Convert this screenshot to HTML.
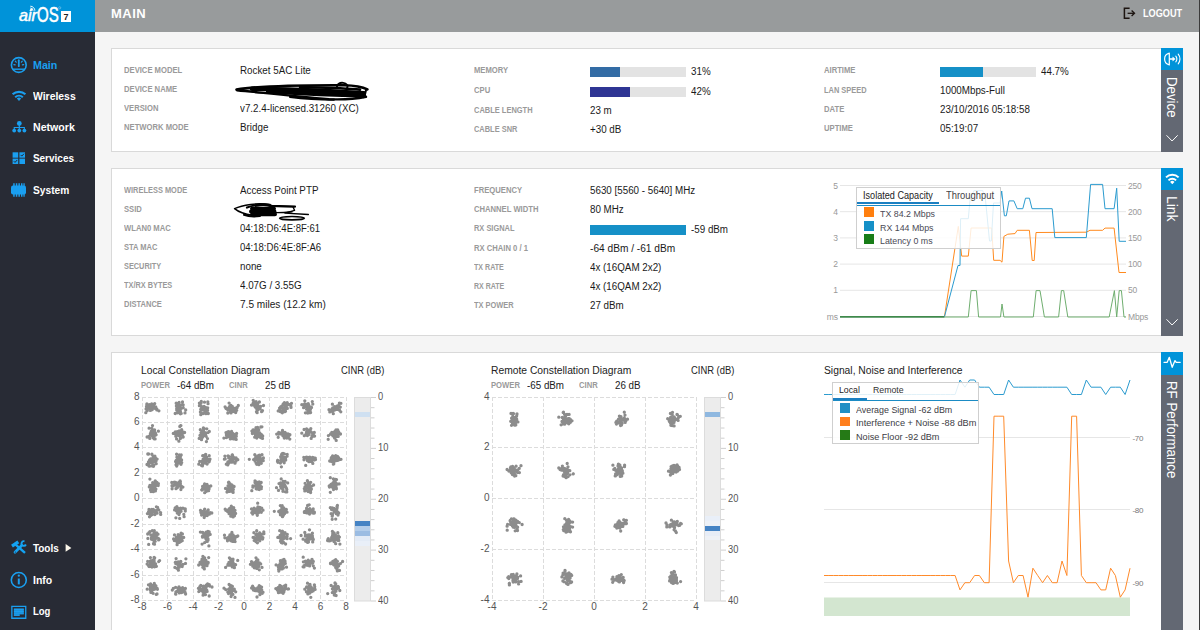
<!DOCTYPE html>
<html lang="en">
<head>
<meta charset="utf-8">
<title>airOS - Main</title>
<style>
html,body{margin:0;padding:0;}
body{width:1201px;height:630px;overflow:hidden;position:relative;background:#f5f5f5;font-family:"Liberation Sans",sans-serif;font-size:10px;color:#1a1a1a;}
.lb,.vl,.nav,.t,.ct{position:absolute;white-space:nowrap;}
#side{position:absolute;left:0;top:0;width:95px;height:630px;background:#282b35;}
#logo{position:absolute;left:0;top:0;width:95px;height:32px;background:#0093d9;}
#head{position:absolute;left:95px;top:0;width:1104px;height:32px;background:#989b9c;}
#edge{position:absolute;left:1199px;top:0;width:1px;height:630px;background:#3b3b3b;}
#edge2{position:absolute;left:1200px;top:0;width:1px;height:630px;background:#fff;}
#title{position:absolute;left:111px;top:6px;font-size:13px;font-weight:bold;color:#fff;letter-spacing:.5px;line-height:16px;}
#logout{position:absolute;left:1142.7px;top:7px;font-size:10px;font-weight:bold;color:#fff;line-height:13px;transform:scaleX(.915);transform-origin:0 50%;}
.panel{position:absolute;left:111px;width:1049px;background:#fff;border:1px solid #d9d9d9;}
.tab{position:absolute;left:1161px;width:22px;background:#636873;}
.tabtop{position:absolute;left:0;top:0;width:22px;height:22px;background:#0093d9;}
.tabtxt{position:absolute;left:19.2px;transform-origin:0 0;transform:rotate(90deg) scaleX(.885);color:#fff;font-size:15px;line-height:15px;white-space:nowrap;}
.lb{font-size:8.5px;color:#9a9a9a;line-height:10px;transform:scaleX(.9);transform-origin:0 50%;font-weight:bold;}
.vl{font-size:10px;color:#1a1a1a;line-height:12px;transform:scaleX(.98);transform-origin:0 50%;}
.nav{left:32.9px;font-size:10px;font-weight:bold;color:#fff;line-height:14px;transform:scaleX(1.05);transform-origin:0 50%;}
.bar{position:absolute;height:10px;width:96px;background:#e3e3e3;}
.bar i{position:absolute;left:0;top:0;height:10px;display:block;}
svg{position:absolute;left:0;top:0;overflow:visible;}
.ct{font-size:10px;color:#222;line-height:12px;}
.t{font-size:9px;line-height:10px;color:#555;}
</style>
</head>
<body>

<!-- SIDEBAR -->
<div id="side"></div>
<div id="logo"></div>
<div class="t" style="left:19px;top:5.85px;font-size:17px;line-height:20px;font-style:italic;color:#fff;-webkit-text-stroke:.5px #fff;transform:scaleX(.95);transform-origin:0 50%">air</div>
<div class="t" style="left:37.3px;top:3px;font-size:21.5px;line-height:24px;color:#fff;-webkit-text-stroke:.5px #fff;transform:scaleX(.7);transform-origin:0 50%">OS</div>
<div style="position:absolute;left:61px;top:11px;width:10px;height:11px;background:#fff"></div>
<div class="t" style="left:63.5px;top:11.5px;font-size:9px;font-weight:bold;color:#222;line-height:10px">7</div>
<svg width="95" height="32" viewBox="0 0 95 32"><g fill="none" stroke="#fff" stroke-width=".9"><path d="M30.3 6.2 a4.6 4.6 0 0 1 4.6 4.6"/><path d="M30.3 8 a2.8 2.8 0 0 1 2.8 2.8"/><circle cx="30.6" cy="10.4" r=".5" fill="#fff"/><circle cx="59.7" cy="7.8" r="1.1" stroke-width=".4" stroke="#bfe3f6"/></g></svg>

<div class="nav" style="top:59px;color:#1a9ff0;transform:scaleX(1.07)">Main</div>
<div class="nav" style="top:90px;transform:scaleX(1.04)">Wireless</div>
<div class="nav" style="top:121px;transform:scaleX(1.06)">Network</div>
<div class="nav" style="top:152px;transform:scaleX(1)">Services</div>
<div class="nav" style="top:184px;transform:scaleX(1.02)">System</div>
<div class="nav" style="top:542px;transform:scaleX(1)">Tools</div>
<div class="nav" style="top:574px;transform:scaleX(1.05)">Info</div>
<div class="nav" style="top:605px;transform:scaleX(0.95)">Log</div>
<svg width="95" height="630" viewBox="0 0 95 630">
<g fill="none" stroke="#1a9ff0" stroke-width="1.6" stroke-linecap="round">
 <!-- main gauge -->
 <circle cx="18.8" cy="65" r="7.4"/>
 <path d="M18.8 66.2V60.2" stroke-width="1.8"/>
 <path d="M12.6 69.2H25" stroke-width="1.4" stroke-linecap="butt"/>
 <path d="M15.3 61.2l.9 1M13.9 64.6l1.3.3M22.3 61.2l-.9 1M23.7 64.6l-1.3.3" stroke-width="1.2"/>
 <!-- wireless -->
 <path d="M12.6 94.3a9.4 9.4 0 0 1 12.8 0" stroke-width="2.2" stroke-linecap="butt"/>
 <path d="M15.2 97.2a5.6 5.6 0 0 1 7.6 0" stroke-width="2.1" stroke-linecap="butt"/>
 <path d="M19 101l-2.2-2.4a3.1 3.1 0 0 1 4.4 0z" fill="#1a9ff0" stroke="none"/>
 <!-- info -->
 <circle cx="18.8" cy="580" r="7.5" stroke-width="1.6"/>
 <path d="M18.8 578.5V584.4" stroke-width="2" stroke-linecap="butt"/>
 <circle cx="18.8" cy="575.7" r="1.15" fill="#1a9ff0" stroke="none"/>
</g>
<g fill="#1a9ff0" stroke="none">
 <!-- network -->
 <circle cx="19.3" cy="123.4" r="2.4"/>
 <circle cx="14.2" cy="130.6" r="1.9"/><circle cx="19.3" cy="130.6" r="1.9"/><circle cx="24.4" cy="130.6" r="1.9"/>
 <path d="M18.7 125h1.2v2h5v3h-1.1v-1.9h-3.9v1.9h-1.2v-1.9h-3.9v1.9h-1.1v-3h5z"/>
 <!-- services -->
 <rect x="12.6" y="152.3" width="5.6" height="5.4"/><rect x="19.4" y="152.3" width="5.6" height="5.4"/>
 <rect x="12.6" y="158.6" width="5.6" height="5.4"/><rect x="19.4" y="158.6" width="5.6" height="5.4"/>
 <!-- system chip -->
 <rect x="11" y="185.4" width="15" height="9" rx="2"/>
 <path d="M13.2 183.3h1.5v13.4h-1.5zM15.8 183.3h1.5v13.4h-1.5zM18.4 183.3h1.5v13.4h-1.5zM21 183.3h1.5v13.4h-1.5zM23.4 183.3h1.3v13.4h-1.3z"/>
 <!-- log -->
 <path d="M11.2 605.8h15.2v13.1h-15.2zM12.5 607.1v10.5h12.6v-10.5z" fill-rule="evenodd"/>
 <path d="M13.9 608.6h9.9v5.8h-4.2v1.7h-5.7z" opacity=".8"/><path d="M13.9 608.7h9.9v1.3h-9.9zM13.9 610.6h9.9v1.3h-9.9zM13.9 612.5h9.9v1.3h-9.9zM13.9 614.4h5.7v1.3h-5.7z"/>
 <!-- tools -->
 <path d="M15.6 544.6L25 552.8" stroke="#14a3f3" stroke-width="2.4" fill="none"/>
 <path d="M12 546.1L18.3 541.9" stroke="#14a3f3" stroke-width="3.3" fill="none"/>
 <path d="M21.4 545.8L15 552.3" stroke="#14a3f3" stroke-width="2.7" stroke-linecap="round" fill="none"/>
 <path d="M24.5 541.3A2.3 2.3 0 1 0 25.9 544.5" stroke="#14a3f3" stroke-width="1.9" fill="none"/>
 <circle cx="15.3" cy="552.1" r=".55" fill="#282b35"/>
</g>
<g fill="none" stroke="#282b35" stroke-width="1">
 <path d="M20.6 154.9l1.2 1.2 2.2-2.4"/><path d="M13.8 161.2l1.2 1.2 2.2-2.4"/>
</g>
<path d="M65.6 544v7.8l5.8-3.9z" fill="#fbf6ea"/>
</svg>

<!-- HEADER -->
<div id="head"></div>
<div id="title">MAIN</div>
<div id="logout">LOGOUT</div>
<svg width="1201" height="32" viewBox="0 0 1201 32"><g fill="none" stroke="#1c1410" stroke-width="1.5"><path d="M1129.6 8.3h-5.2v10h5.2"/><path d="M1127.6 13.3h6.4" stroke-width="1.3"/><path d="M1131.6 10.6l2.9 2.7-2.9 2.7" stroke-width="1.3"/></g></svg>
<div id="edge"></div><div id="edge2"></div>

<!-- PANEL 1 : DEVICE -->
<div class="panel" style="top:48px;height:102px"></div>
<div class="tab" style="top:48px;height:104px"><div class="tabtop"></div><div class="tabtxt" style="top:29px">Device</div></div>
<svg width="1201" height="160" viewBox="0 0 1201 160"><g fill="none" stroke="#fff" stroke-width="1.1" stroke-linecap="round">
 <path d="M1169.3 53v12M1169.3 53.2a6.3 6 0 0 0 0 11.6" stroke-width="1.2"/>
 <path d="M1169.8 59h3.4" stroke-width="1.4"/><path d="M1173 57.3l2.2 1.7-2.2 1.7z" fill="#fff" stroke-width=".6"/>
 <path d="M1175.8 56.2a4.6 4.6 0 0 1 0 5.6"/><path d="M1178.2 54.2a7.4 7.4 0 0 1 0 9.6"/>
 <path d="M1166.8 135.6l5.3 5.4 5.3-5.4" stroke-width="1"/>
</g></svg>

<div class="lb" style="left:124px;top:65px">DEVICE MODEL</div><div class="vl" style="left:240px;top:65px">Rocket 5AC Lite</div>
<div class="lb" style="left:124px;top:84px">DEVICE NAME</div>
<div class="lb" style="left:124px;top:103px">VERSION</div><div class="vl" style="left:240px;top:103px">v7.2.4-licensed.31260 (XC)</div>
<div class="lb" style="left:124px;top:122px">NETWORK MODE</div><div class="vl" style="left:240px;top:122px">Bridge</div>

<div class="lb" style="left:474px;top:65px">MEMORY</div><div class="bar" style="left:590px;top:67px"><i style="width:30px;background:#336ca5"></i></div><div class="vl" style="left:691px;top:66px">31%</div>
<div class="lb" style="left:474px;top:85px">CPU</div><div class="bar" style="left:590px;top:87px"><i style="width:40px;background:#2f3594"></i></div><div class="vl" style="left:691px;top:86px">42%</div>
<div class="lb" style="left:474px;top:105px;transform:scaleX(0.88)">CABLE LENGTH</div><div class="vl" style="left:590px;top:105px">23 m</div>
<div class="lb" style="left:474px;top:124px;transform:scaleX(0.875)">CABLE SNR</div><div class="vl" style="left:590px;top:124px">+30 dB</div>

<div class="lb" style="left:824px;top:65px">AIRTIME</div><div class="bar" style="left:940px;top:67px"><i style="width:43px;background:#1590c7"></i></div><div class="vl" style="left:1041px;top:66px">44.7%</div>
<div class="lb" style="left:824px;top:85px;transform:scaleX(0.875)">LAN SPEED</div><div class="vl" style="left:940px;top:85px">1000Mbps-Full</div>
<div class="lb" style="left:824px;top:104px">DATE</div><div class="vl" style="left:940px;top:104px">23/10/2016 05:18:58</div>
<div class="lb" style="left:824px;top:123px">UPTIME</div><div class="vl" style="left:940px;top:123px">05:19:07</div>

<!-- redaction scribble over device name -->
<svg width="1201" height="160" viewBox="0 0 1201 160"><g fill="none" stroke="#000" stroke-linecap="round" stroke-linejoin="round">
 <path d="M236.5 89.6C262 85.5 300 85 344 85.2c10 .2 18 1.4 23.4 4.2" stroke-width="2.6"/>
 <path d="M237 90.2c30 3 60 6.5 92 9 14 .6 28-.6 37-2.4" stroke-width="2.4"/>
 <path d="M252 88.8c36 .2 70 2 112 4.4" stroke-width="4.6"/>
 <path d="M268 91.4c30 1.8 62 3.4 96 4" stroke-width="4.2"/>
 <path d="M300 87c22 .6 44 1 60 2.6" stroke-width="2.6"/>
 <path d="M337 87.6c-.6-3.6 3-5.2 6.2-4.8 3.4.4 5.4 3 3.6 5.6" stroke-width="1.8"/>
 <path d="M366 90.4l-2.2 6.8" stroke-width="2"/>
 <path d="M290 96.8c14 1.8 28 2.7 44 2.8" stroke-width="2.2"/>
</g></svg>

<!-- PANEL 2 : LINK -->
<div class="panel" style="top:168px;height:166px"></div>
<div class="tab" style="top:168px;height:168px"><div class="tabtop"></div><div class="tabtxt" style="top:28.3px;transform:rotate(90deg) scaleX(.93)">Link</div></div>
<svg width="1201" height="340" viewBox="0 0 1201 340"><g fill="none" stroke="#fff" stroke-linecap="butt">
 <path d="M1166 177.4a9 9 0 0 1 12.6 0" stroke-width="2"/>
 <path d="M1168.5 180.3a5.4 5.4 0 0 1 7.6 0" stroke-width="1.9"/>
 <path d="M1172.3 184.2l-2.2-2.3a3.1 3.1 0 0 1 4.4 0z" fill="#fff" stroke="none"/>
 <path d="M1166.8 319.6l5.3 5.4 5.3-5.4" stroke-width="1" stroke-linecap="round"/>
</g></svg>

<div class="lb" style="left:124px;top:185px;transform:scaleX(0.875)">WIRELESS MODE</div><div class="vl" style="left:240px;top:185px">Access Point PTP</div>
<div class="lb" style="left:124px;top:204px">SSID</div>
<div class="lb" style="left:124px;top:223px">WLAN0 MAC</div><div class="vl" style="left:240px;top:223px;transform:scaleX(.953)">04:18:D6:4E:8F:61</div>
<div class="lb" style="left:124px;top:242px;transform:scaleX(0.885)">STA MAC</div><div class="vl" style="left:240px;top:242px;transform:scaleX(.953)">04:18:D6:4E:8F:A6</div>
<div class="lb" style="left:124px;top:261px;transform:scaleX(0.865)">SECURITY</div><div class="vl" style="left:240px;top:261px">none</div>
<div class="lb" style="left:124px;top:280px;transform:scaleX(0.865)">TX/RX BYTES</div><div class="vl" style="left:240px;top:280px">4.07G / 3.55G</div>
<div class="lb" style="left:124px;top:299px;transform:scaleX(0.885)">DISTANCE</div><div class="vl" style="left:240px;top:299px;transform:scaleX(1.01)">7.5 miles (12.2 km)</div>

<div class="lb" style="left:474px;top:185px">FREQUENCY</div><div class="vl" style="left:590px;top:185px">5630 [5560 - 5640] MHz</div>
<div class="lb" style="left:474px;top:204px">CHANNEL WIDTH</div><div class="vl" style="left:590px;top:204px">80 MHz</div>
<div class="lb" style="left:474px;top:223px;transform:scaleX(0.875)">RX SIGNAL</div><div class="bar" style="left:590px;top:225px"><i style="width:96px;background:#1590c7"></i></div><div class="vl" style="left:691px;top:224px">-59 dBm</div>
<div class="lb" style="left:474px;top:243px">RX CHAIN 0 / 1</div><div class="vl" style="left:590px;top:243px;transform:scaleX(1.015)">-64 dBm / -61 dBm</div>
<div class="lb" style="left:474px;top:262px;transform:scaleX(0.835)">TX RATE</div><div class="vl" style="left:590px;top:262px">4x (16QAM 2x2)</div>
<div class="lb" style="left:474px;top:281px;transform:scaleX(0.825)">RX RATE</div><div class="vl" style="left:590px;top:281px">4x (16QAM 2x2)</div>
<div class="lb" style="left:474px;top:300px;transform:scaleX(0.875)">TX POWER</div><div class="vl" style="left:590px;top:300px">27 dBm</div>

<!-- redaction scribble over SSID -->
<svg width="1201" height="340" viewBox="0 0 1201 340"><g fill="none" stroke="#000" stroke-linecap="round" stroke-linejoin="round">
 <path d="M270 204.6c-12-2.2-28 .4-35.4 4 4 3.4 10 5.6 18 6.6" stroke-width="1.5"/>
 <path d="M247 207.5c8-3 18-3.4 24-1.6l24 .6" stroke-width="2.2"/>
 <path d="M252 208.8h22M251 211.6h23.5M252 214.3h23" stroke-width="4"/><path d="M256 205.6c6-1.4 12-1.2 16 .6" stroke-width="2.6"/>
 <path d="M244 214.8c4 1.6 10 2 16 1.2" stroke-width="2"/>
 <path d="M272 206.3l23 .4" stroke-width="1.6"/>
 <path d="M274 212.6c6 .2 12-.2 18-.8" stroke-width="1.4"/>
 <path d="M293 207l1.6 3.4-9.6 2.8 23.4 1.3" stroke-width="1.3"/>
 <ellipse cx="292" cy="218.2" rx="12.4" ry="1.7" stroke-width="1.6"/>
</g></svg>

<!-- throughput chart -->
<svg width="1201" height="340" viewBox="0 0 1201 340" shape-rendering="auto">
<g stroke="#e6e6e6" stroke-width="1"><path d="M840 185.5H1126"/><path d="M840 211.7H1126"/><path d="M840 237.9H1126"/><path d="M840 264.1H1126"/><path d="M840 290.3H1126"/><path d="M840 316.5H1126"/></g>
<g fill="none" stroke-width="1" stroke-linejoin="round"><polyline points="840,317 944.4,317 958.3,226.4 961.7,256.1 968.3,256.1 971.1,228 991.7,228 993.7,260.3 1000,260.3 1002,262.2 1003.9,236.4 1007.8,234.2 1015,233.6 1017.2,230.3 1029.4,230.3 1032.2,260.5 1034.2,260.5 1036,232.5 1086.3,232.2 1090,230.3 1102.6,230.3 1105,228.1 1114.1,228.1 1119,272.5 1126,272.5" stroke="#ff8a1e"/><polyline points="840,317 944.4,317 958,265.5 960,265.5 960.6,218.7 968.3,218.7 970,200 973.9,190.7 982.8,190.7 985.5,200 987.2,217 989.5,241 991.3,241 993.5,203 1000,203 1001.7,191 1004.4,215.8 1006.3,215.8 1009,200.9 1013.9,200.9 1017.2,208.7 1022.8,208.7 1025.5,198.2 1029.4,198.2 1032,208.7 1052.2,208.7 1054.8,237.6 1086.3,237.6 1090.6,184.4 1102.6,184.4 1105,208.7 1114.1,208.7 1116.7,188.2 1119.2,241.3 1126,241.3" stroke="#2b9bcf"/><polyline points="840,317 968.3,317 971.1,290.6 976.4,290.6 978.6,317 1000.5,317 1002,304 1003.9,317 1033.3,317 1036.1,290.6 1040,290.6 1044.4,317 1058.6,317 1061.4,290.6 1063.7,290.6 1067.8,317 1109.2,317 1114.4,290.6 1116.7,317 1119.2,290.6 1121.4,290.6 1124,317 1126,317" stroke="#6fae6f"/><path d="M840 316.6H944" stroke="#3f8a4a" stroke-width="1.4"/></g>
</svg>
<div class="t ax" style="left:818px;width:20px;text-align:right;top:180.5px;color:#999;font-size:8.5px">5</div>
<div class="t ax" style="left:818px;width:20px;text-align:right;top:206.7px;color:#999;font-size:8.5px">4</div>
<div class="t ax" style="left:818px;width:20px;text-align:right;top:232.9px;color:#999;font-size:8.5px">3</div>
<div class="t ax" style="left:818px;width:20px;text-align:right;top:259.1px;color:#999;font-size:8.5px">2</div>
<div class="t ax" style="left:818px;width:20px;text-align:right;top:285.3px;color:#999;font-size:8.5px">1</div>
<div class="t ax" style="left:818px;width:20px;text-align:right;top:311.5px;color:#999;font-size:8.5px">ms</div>
<div class="t ax" style="left:1128px;top:180.5px;color:#999;font-size:8.5px;letter-spacing:-.2px">250</div>
<div class="t ax" style="left:1128px;top:206.7px;color:#999;font-size:8.5px;letter-spacing:-.2px">200</div>
<div class="t ax" style="left:1128px;top:232.9px;color:#999;font-size:8.5px;letter-spacing:-.2px">150</div>
<div class="t ax" style="left:1128px;top:259.1px;color:#999;font-size:8.5px;letter-spacing:-.2px">100</div>
<div class="t ax" style="left:1128px;top:285.3px;color:#999;font-size:8.5px;letter-spacing:-.2px">50</div>
<div class="t ax" style="left:1128px;top:311.5px;color:#999;font-size:8.5px;letter-spacing:-.2px">Mbps</div>
<div style="position:absolute;left:856px;top:187px;width:143px;height:60px;background:rgba(255,255,255,.84);border:1px solid #cfcfcf"></div>
<div style="position:absolute;left:857px;top:202px;width:82px;height:2px;background:#1b7fc1"></div>
<div style="position:absolute;left:857px;top:205px;width:143px;height:1px;background:#1b8bc4"></div>
<div class="t" style="left:863px;top:189.5px;font-size:10px;line-height:12px;color:#222;transform:scaleX(.91);transform-origin:0 50%">Isolated Capacity</div>
<div class="t" style="left:945.5px;top:189.5px;font-size:10px;line-height:12px;color:#444;transform:scaleX(.94);transform-origin:0 50%">Throughput</div>
<div style="position:absolute;left:864px;top:207px;width:10px;height:10px;background:#ff7f0e"></div>
<div class="t" style="left:880px;top:208px;font-size:9.5px;line-height:11px;color:#4a4a55;transform:scaleX(.93);transform-origin:0 50%">TX 84.2 Mbps</div>
<div style="position:absolute;left:864px;top:221px;width:10px;height:10px;background:#1590c7"></div>
<div class="t" style="left:880px;top:222px;font-size:9.5px;line-height:11px;color:#4a4a55;transform:scaleX(.93);transform-origin:0 50%">RX 144 Mbps</div>
<div style="position:absolute;left:864px;top:234px;width:10px;height:10px;background:#187d18"></div>
<div class="t" style="left:880px;top:235px;font-size:9.5px;line-height:11px;color:#4a4a55;transform:scaleX(.93);transform-origin:0 50%">Latency 0 ms</div>
<!-- PANEL 3 : RF PERFORMANCE -->
<div class="panel" style="top:352px;height:290px"></div>
<div class="tab" style="top:352px;height:290px"><div class="tabtop" style="height:23px"></div><div class="tabtxt" style="top:28.8px">RF Performance</div></div>
<svg width="1201" height="630" viewBox="0 0 1201 630"><path d="M1164 362.3h3.2l2.1-5 2.9 10 2.8-6.7 1.2 1.7h4" fill="none" stroke="#fff" stroke-width="1.3" stroke-linejoin="round" stroke-linecap="round"/></svg>
<div class="ct" style="left:141px;top:365px;transform:scaleX(1.03);transform-origin:0 50%">Local Constellation Diagram</div>
<div class="ct" style="left:341px;top:365px;transform:scaleX(.94);transform-origin:0 50%">CINR (dB)</div>
<div class="lb" style="left:141px;top:380px">POWER</div><div class="vl" style="left:177px;top:379.5px">-64 dBm</div>
<div class="lb" style="left:229px;top:380px">CINR</div><div class="vl" style="left:265px;top:379.5px">25 dB</div>
<svg width="1201" height="630" viewBox="0 0 1201 630">
<path d="M142 397V600.5M142 397H346M167.5 397V600.5M142 422.438H346M193 397V600.5M142 447.875H346M218.5 397V600.5M142 473.312H346M244 397V600.5M142 498.75H346M269.5 397V600.5M142 524.188H346M295 397V600.5M142 549.625H346M320.5 397V600.5M142 575.062H346M346 397V600.5M142 600.5H346" fill="none" stroke="#dcdcdc" stroke-width="1" stroke-dasharray="4 2" shape-rendering="crispEdges"/>
<path d="M146.9 404h0M152.6 408.2h0M149.9 407.7h0M151.2 406.8h0M146.8 404.2h0M149.4 404.6h0M156.8 409h0M154.8 408.1h0M150.6 406.6h0M148.2 407.9h0M148.3 405.4h0M151.9 406.2h0M150.4 406.3h0M156.9 409.9h0M147.9 405.3h0M147.9 406.6h0M153.5 405h0M155.7 406.8h0M152.3 408.6h0M152.9 406.4h0M150.7 409.4h0M149.9 408.9h0M151.4 406.5h0M150.2 406.8h0M147.1 410.7h0M146.1 408.9h0M156.4 409.2h0M154.7 403.6h0M150.3 408.6h0M146.5 406.4h0M153.9 407.9h0M152.1 409.7h0M154.8 408.3h0M151.7 409.2h0M151.7 405.7h0M151.7 404h0M150.3 410.4h0M151.1 409h0M151.3 407.3h0M151.8 409.8h0M145.8 412.7h0M158.9 410.8h0M180.4 413.8h0M177.3 407.2h0M178.6 410.6h0M179.2 408.3h0M180.6 409.4h0M177.4 408.6h0M178.7 404h0M177.6 408.2h0M185 412.9h0M181.8 404.8h0M176.2 403.2h0M181.2 413.4h0M179.2 405.3h0M176.4 406h0M177.6 407.1h0M180 412.3h0M177.5 412.8h0M177.7 412.7h0M179.1 402.5h0M179.4 407.6h0M176.7 410.1h0M182.5 402h0M180 405.2h0M177.6 412.1h0M180.2 412.5h0M177.4 408.3h0M183.2 407.7h0M177.3 403.6h0M178.6 406.4h0M180.4 411.6h0M183.2 404.8h0M181.2 408.4h0M178.5 408.2h0M180 407.1h0M180.2 407.9h0M179.3 410.7h0M176.7 408.7h0M176.8 406.9h0M179 407.7h0M179.1 410.3h0M179.3 407.7h0M175.2 413.5h0M185.7 409.9h0M205.8 411.7h0M202.5 409.2h0M202.7 409.5h0M207.8 401.8h0M207.6 410.2h0M208 403.7h0M203.1 413.5h0M208 413.5h0M207.7 407.8h0M200.4 412h0M199.4 405.7h0M205.6 412h0M199.4 403.1h0M206.1 407.7h0M203.5 410h0M208.3 413.5h0M200.9 413.3h0M205.9 413.7h0M201.1 406h0M204.1 408.8h0M206.1 413.6h0M204.5 402.2h0M201.1 402.8h0M206.4 409.2h0M202 408.7h0M200.7 409.3h0M201.4 408.6h0M200.8 414.7h0M203.4 409.7h0M201.4 406.6h0M201.3 410h0M202.5 408.3h0M204.1 408.3h0M203.5 408.7h0M207.3 408.4h0M205.3 409.9h0M204.1 406.3h0M201.3 401.4h0M233.5 410.3h0M236.7 410.3h0M233.4 409.7h0M235.2 408.8h0M231.4 410.2h0M225.3 407.3h0M228.6 408h0M225.1 406.8h0M237.2 407.5h0M232.7 407.9h0M227.7 408.6h0M228.6 409.3h0M229.7 406.3h0M231.2 410.3h0M234.4 411.7h0M235.3 408.1h0M229.1 409.4h0M232.9 410.7h0M231.1 407.6h0M232.5 407.9h0M230.1 407h0M229.1 403.1h0M228 409.3h0M230 409.1h0M228.8 409.6h0M226.1 408.5h0M227.8 409.7h0M227.8 413h0M235.7 412.5h0M231 412.9h0M232 409.1h0M231.8 407.9h0M231 405.5h0M232.3 406.5h0M232.5 407.9h0M229.1 408.1h0M229.5 408.5h0M230.4 411.3h0M232.3 411.6h0M238.3 405.5h0M261.9 411.4h0M251.5 405.1h0M257.4 406.3h0M259.4 402h0M259.7 408.4h0M257.1 412.7h0M256.8 403.8h0M256.9 409.5h0M257.7 405.1h0M263.5 405.5h0M258 407.6h0M253.2 403.1h0M255.9 405.4h0M253.5 405h0M257.2 403.3h0M253.9 402.2h0M259.9 408.6h0M257 408.6h0M256.5 411.8h0M258.2 406h0M262.5 410.6h0M258.1 407h0M256.1 401.6h0M256.7 406.7h0M257.6 404.7h0M253.2 403.1h0M255.8 403h0M258.9 408.7h0M257.5 407.2h0M255.2 407h0M259.9 408.8h0M261.6 411.7h0M257.8 408.1h0M257.3 407.7h0M257.2 409.4h0M257.7 409.9h0M260.1 408.7h0M258.9 408.8h0M256.6 407.9h0M257.2 406.6h0M260.7 406.3h0M253.2 400.3h0M285.4 407.2h0M284.8 411.7h0M286.3 405h0M286.7 408.4h0M282.3 412.8h0M288.9 404.4h0M280.2 411.5h0M285.5 411.2h0M281.5 412h0M283 408.2h0M290.9 406.2h0M284.2 404.5h0M283.3 408.1h0M285.7 406h0M282.1 405.8h0M278.2 410.9h0M283.5 409h0M287.9 403.8h0M287.2 402.7h0M284 409.7h0M285.1 408.9h0M286.9 407.3h0M283.9 408.8h0M283.1 410.2h0M280.1 410.7h0M280.6 407h0M283.2 403.9h0M287.3 408.4h0M285.1 409.1h0M279.6 408.1h0M284.8 408.4h0M281.3 407.9h0M283.5 409.5h0M284.4 402.7h0M282.5 407.3h0M285.4 408.6h0M283.7 408.3h0M291 407.4h0M291.5 403.3h0M310.5 409.3h0M310.2 411.8h0M303.6 407.7h0M308.3 406.3h0M307.9 411.6h0M308 404h0M306.6 409.2h0M304.7 403.9h0M307.8 413.1h0M309.2 408.2h0M309.4 412.7h0M309.2 409.8h0M306.9 404.3h0M307.9 412.3h0M306.7 404.4h0M307.6 406.9h0M305.4 412.8h0M303.5 404.7h0M306.6 407h0M308.6 404.6h0M304.8 400.8h0M310.6 412.6h0M312.3 401.6h0M309 411.7h0M309 406.9h0M310.7 406.8h0M311.5 407.5h0M307.6 406.8h0M308.7 409h0M308.2 403.6h0M305 405h0M309.5 406.9h0M307.5 406h0M306.8 406.6h0M308.8 407.9h0M309.2 410.5h0M307.2 407.1h0M312.8 404.1h0M307.5 407.4h0M308.5 407.8h0M301.8 404.7h0M338 405.8h0M336.7 406.3h0M332.1 408.8h0M333.3 409.4h0M339.8 406.8h0M333.8 410.3h0M334.7 406.7h0M337.4 406h0M329.8 411.9h0M334.6 409.1h0M329.4 409.8h0M332.4 411.3h0M335 408.6h0M339.4 403.2h0M333.3 413.7h0M332.5 409.8h0M333.1 408.3h0M340.3 407.1h0M330.3 411.8h0M339.6 410.4h0M338.9 406.2h0M329 409.7h0M332.4 404.2h0M337.3 409.4h0M332.7 408h0M339.4 409.9h0M333.7 408.4h0M332.9 408.2h0M334.1 409.3h0M334.8 408.4h0M334.4 410.2h0M337.2 408h0M336.3 407.3h0M335.1 409.8h0M337.4 407.9h0M334.8 408.9h0M340.9 403.3h0M340.8 411.8h0M151.9 432.1h0M154.6 430h0M150.4 433.3h0M155.5 433.5h0M153.8 432.1h0M153.2 437.8h0M149.8 438.4h0M150.5 433.4h0M152.9 436.2h0M149.1 428.2h0M154.4 435.8h0M154.1 438.8h0M153.2 434.3h0M155.6 434.8h0M158.4 431.2h0M151.9 428.5h0M155.4 433h0M155.1 438.9h0M152.7 433h0M151.2 431.4h0M150.4 435h0M152.7 433.8h0M151.8 435.8h0M154.3 433.5h0M154.9 433.5h0M148.5 436.7h0M154.4 431.5h0M156.1 434.8h0M147.1 437h0M153.2 435.1h0M153 433.4h0M150.2 435.2h0M152.7 433.2h0M153.2 433.7h0M153.7 433h0M152.6 430.2h0M152 434.7h0M154.8 433h0M152.5 425.6h0M179.3 434.2h0M177.3 431.7h0M176.6 438.9h0M180.4 431h0M181.7 429.7h0M178.6 435.5h0M181 437.8h0M180.4 438.4h0M182.6 432.7h0M179.2 430.8h0M180.2 434.4h0M175.3 432h0M179 432.8h0M175.8 436.3h0M179.8 426.5h0M178.9 441.2h0M179 432.6h0M175.8 434.8h0M182.4 434.7h0M177.5 431.8h0M184.6 432.5h0M183.2 437h0M181.2 433.6h0M179.7 436h0M182.8 431.9h0M181 434.6h0M178.3 432.1h0M173.3 433.4h0M182.6 432.2h0M180.6 425.7h0M181.8 431.6h0M180.5 431.3h0M180.4 433.4h0M176.8 433.9h0M181.6 430.5h0M181 433.8h0M180.5 434.2h0M181.8 433.1h0M181.1 432.8h0M180.9 432.2h0M180.9 425.6h0M202.3 435h0M201 432.8h0M205.6 433.5h0M202.7 436.7h0M205.5 433.8h0M202.8 432.8h0M206.2 436.3h0M203 435.3h0M203.4 430.5h0M205 433.6h0M200 435.4h0M203.8 431.7h0M200.3 429.7h0M201.8 431.6h0M202.9 431.5h0M206.4 441.6h0M203.3 432.4h0M205.5 434.5h0M201.5 439.7h0M204 428.5h0M203.4 428h0M204.3 432.3h0M202.2 437.8h0M209.3 431.5h0M200.9 437h0M203 431h0M201.9 435.1h0M206.8 428.8h0M201.2 436.2h0M207.5 438.6h0M202.6 434.2h0M208 432.6h0M203.4 434.2h0M205.3 433.4h0M205.8 432.9h0M204.3 433.3h0M204.2 433.1h0M201.4 435.9h0M204.4 433.3h0M204.2 435.7h0M199.2 438.4h0M236.3 436.3h0M233.6 437.2h0M226 432.6h0M228.9 436.8h0M227.5 432.5h0M228.7 431.6h0M229.7 434.5h0M227.8 431.8h0M230.4 438.9h0M231.6 431.5h0M231.8 437.3h0M231.8 435.4h0M229 434.7h0M226.4 435h0M235.1 435.9h0M235.1 437.1h0M231.6 431.3h0M234.2 435.9h0M223.9 438.1h0M234.4 438.9h0M236.1 435h0M231.6 432.8h0M234.5 434.5h0M236.6 433.5h0M233.1 438.8h0M231.7 434.1h0M226.5 437.5h0M232.3 437.2h0M230 437.2h0M231.6 435.8h0M231.4 433.8h0M230.3 436.2h0M230.3 434.7h0M230.9 435.2h0M232.7 433.4h0M231.2 433.7h0M236.2 439.4h0M258.8 435.5h0M257.6 427.5h0M259.8 433h0M255.2 431.5h0M255.7 435.7h0M256.7 435.9h0M260.8 427h0M254.1 432.9h0M251.9 431.1h0M262.5 438.4h0M260.6 437.6h0M259.2 433.3h0M253.6 432.9h0M255.6 430.9h0M257 437.5h0M257.7 432.7h0M256.8 438h0M254.1 432.7h0M257.4 430.1h0M255.9 433.2h0M253 429.9h0M257 434h0M261.5 434.7h0M256.8 432.5h0M254.7 437.2h0M252.4 433.5h0M257.7 434.7h0M262.7 436h0M258.7 429.6h0M258.7 430h0M256.9 431.6h0M257.5 434.8h0M258.3 433.8h0M259.2 436.6h0M259 435h0M256.7 432.7h0M255.7 434.6h0M255.9 431.8h0M255.4 434.7h0M256.7 433.6h0M253.7 430h0M256 427.7h0M261.9 426.8h0M282.5 432.9h0M289.9 434.7h0M285.8 435.3h0M286.9 438h0M282.5 430.3h0M289.7 434.9h0M278.2 437.3h0M284.4 434.5h0M281 433.1h0M289.4 435.4h0M282.9 435.8h0M285.3 434.9h0M278.5 434h0M276.7 434.1h0M289.7 434.9h0M286.5 433.7h0M278.7 432.3h0M283.8 434.9h0M285.6 435.4h0M288.8 434.8h0M278.6 433.9h0M281.4 432.7h0M284.5 435.5h0M282.1 432.7h0M288.4 437.1h0M284.7 435.7h0M282.7 433.5h0M283.8 435.2h0M288.1 433.9h0M284.3 438.1h0M280.7 433.9h0M285 432.5h0M282.6 432.8h0M283 435.4h0M286.8 435.2h0M285.3 432.9h0M285.3 435.8h0M281.8 433h0M289.8 439.1h0M311.2 438.4h0M313.7 435.3h0M307.9 430h0M304.3 435.7h0M309.2 433.2h0M307.7 432.3h0M307.7 432.9h0M306.6 428.8h0M312.4 432.8h0M305.8 434.9h0M307 431.3h0M309.3 432.9h0M307.2 433.6h0M310.8 428.6h0M312.1 436.2h0M311.9 435.7h0M308 431.7h0M314.3 432.4h0M307.5 434.9h0M313.5 436.1h0M304.1 429.5h0M307.9 432.1h0M307.3 433.8h0M314.6 436.1h0M310.7 431.4h0M308.8 430.6h0M305.7 434.6h0M307.6 431.8h0M312.1 436.6h0M309.3 433.2h0M306.5 432.2h0M308.2 433.3h0M306.9 432.6h0M309.7 432.2h0M307.2 433.1h0M306.2 434.1h0M308.5 434.7h0M307.4 435.5h0M301.8 433.2h0M333 435.9h0M336.2 436.8h0M336.2 440.4h0M336 433.5h0M337.1 435h0M328.4 435.6h0M338.7 432h0M333.8 434.2h0M335.3 433.3h0M335.4 436.9h0M338.2 436.4h0M338.4 432.1h0M331.8 432.5h0M334.1 434h0M334.1 432.1h0M337.7 429.9h0M331.8 433.9h0M336.8 432.4h0M334.6 438.1h0M340.5 434h0M336 429.9h0M335.4 431h0M333.2 433.8h0M335.2 433.4h0M330.6 434h0M336.3 431.3h0M334.6 436.7h0M331.6 433.4h0M331.3 434.3h0M337.6 434.8h0M334.2 432.2h0M334.3 435.7h0M336.2 434.5h0M334.8 434.3h0M336.5 430.8h0M335 434.4h0M333.9 433.6h0M335.3 432.7h0M333.8 432.2h0M328.2 439.3h0M154.9 456.2h0M149.6 460h0M151.7 461.6h0M153.9 464.9h0M155.5 458h0M150.7 462.7h0M148.6 454h0M153.5 466.3h0M152.8 464.4h0M147 464.5h0M149.9 466.1h0M148.5 462h0M157.1 459.1h0M148.9 463.5h0M156.2 463.7h0M147.8 454h0M156.1 460.7h0M155.1 461.1h0M154.1 460.9h0M156.2 458.7h0M152.4 466h0M151.9 454.2h0M154.6 461.4h0M154.2 458.4h0M152.1 454.8h0M149 466.1h0M150.3 462h0M151.5 459h0M153.3 457.1h0M154 459.5h0M151 461.9h0M151.6 459.3h0M153.4 460.8h0M150.6 458.9h0M152.8 459.4h0M149.5 461h0M152.6 461.8h0M150.1 459.7h0M178.2 460.5h0M181 464.3h0M177.9 461.4h0M179.3 454.8h0M180.4 456.7h0M181.2 454.9h0M181.1 460.7h0M175.6 461.5h0M180.6 461.1h0M176.9 457.2h0M180.3 458.1h0M180.1 457.3h0M177.1 465.1h0M176.7 460.9h0M179.7 460.4h0M176 464.8h0M176.7 466h0M176.4 462.8h0M180.4 461.3h0M176.6 460.3h0M178 461.2h0M181.6 459.9h0M181.7 462.6h0M179.2 463.1h0M178.3 458.7h0M177.5 462.7h0M178.1 457.5h0M176.6 454.2h0M179.8 463.2h0M176.2 460.5h0M177.5 461.6h0M180.5 460.8h0M179.9 460.5h0M180.8 460.6h0M177.6 460.1h0M177.7 459.9h0M179.6 460.9h0M180 459h0M179.2 460.1h0M177.2 460.6h0M178.5 461.3h0M205.3 463h0M198.8 464.2h0M201.6 465.5h0M202.1 461.1h0M209.5 460.6h0M203.6 460.2h0M202.4 463.7h0M209.2 455.7h0M205.8 456.6h0M207.1 464h0M204.2 455.5h0M204.2 459.1h0M208 459.7h0M202.7 464.5h0M199.7 461.5h0M205.1 459.1h0M205.7 454.3h0M207.1 458.8h0M202.3 464.4h0M202.4 465.9h0M203 460h0M205 457.7h0M206.7 457.7h0M209.1 461.8h0M202.7 455.7h0M205.8 460.1h0M206.3 461.1h0M206.7 457.4h0M210 459.1h0M204.8 459.9h0M204.9 460.3h0M206.1 458.5h0M203.2 459.1h0M203.5 462.2h0M207.3 459.4h0M203.3 459.3h0M206.8 459.3h0M203.4 460.3h0M232.4 458.1h0M232.1 462.2h0M229.2 456.6h0M235.9 461.3h0M237.1 459.5h0M231 460.5h0M225.2 458.9h0M237.8 459.7h0M229.1 458h0M232.2 455h0M228.7 457.9h0M232.9 461.3h0M230 458.7h0M227.8 464.9h0M231.5 462.2h0M224.4 459.2h0M229.2 461.3h0M226.3 464.2h0M236.1 457.9h0M234.1 457.6h0M234.3 458.5h0M232.4 454.9h0M235 463.2h0M230.5 459.2h0M232.6 455.5h0M228.3 463.8h0M227.9 462h0M234.5 458.4h0M230.9 459.1h0M232.3 456.6h0M228.1 455.8h0M229.9 461.8h0M231 461.2h0M233.1 461.7h0M230.2 462.2h0M228.9 462.3h0M231.4 459.2h0M232.3 459.2h0M231.7 459h0M230.1 460.3h0M224.9 456.1h0M255.8 456.8h0M259.8 459.8h0M258.8 462.2h0M254.8 454.7h0M258.9 464.7h0M249.3 459.3h0M256.3 458.8h0M259.6 461.4h0M257.8 455.9h0M263.4 458h0M261.5 458.8h0M262.4 460.5h0M258.6 461.5h0M256.5 459.9h0M261.1 460.1h0M256.8 464.3h0M254.7 458.8h0M257.7 457.4h0M263.2 460.7h0M259.9 462.5h0M261.3 463.3h0M255.1 461.2h0M259.3 455.2h0M255.6 457.9h0M256.8 459h0M256.2 463.3h0M255.6 457.9h0M256 457.4h0M256 460h0M256 460h0M254.4 459.9h0M260 457.1h0M253.6 459.6h0M257.4 458h0M257.4 458.3h0M262 454.7h0M284.3 453.9h0M287.1 456.2h0M281 458.6h0M277.7 460.3h0M284.9 458.5h0M282 461.2h0M284.2 457.5h0M281.6 454.5h0M283.3 457.4h0M285.7 457.4h0M282 460.3h0M282 459.7h0M280.4 463h0M280.8 457.1h0M282.7 457.1h0M281 457.5h0M277.9 462.3h0M282 460.2h0M282.2 453.7h0M277.6 460.3h0M283 453.4h0M277.5 461.5h0M283.4 457.5h0M277.7 461.8h0M285.1 458.2h0M287.2 454.3h0M280.7 456.7h0M281.1 458.7h0M284.2 462.8h0M283.2 459.6h0M284.9 460.2h0M281.7 459.1h0M283.6 461.1h0M282.2 456.2h0M282.1 458.5h0M285.4 460.1h0M280.8 460.4h0M285.7 460h0M281.4 466.8h0M309.8 457.2h0M309.1 461.7h0M307.8 457.3h0M310.3 459.1h0M313.7 458.3h0M311.7 458.7h0M312.8 463.4h0M308.6 461.3h0M311.6 461.3h0M310.3 460h0M305.7 465.4h0M314 457.8h0M314.2 458.5h0M304 459.8h0M309.2 457.4h0M307.7 458.4h0M309.9 459.7h0M305.2 457.9h0M309.7 458.6h0M314.1 460.1h0M315.3 458.1h0M303.8 457.3h0M310.5 459.8h0M306.7 457.6h0M312.7 458.2h0M307.1 457.8h0M306.4 457.1h0M309.2 460.5h0M315.5 459.6h0M311.6 461.6h0M311.5 458.4h0M307.4 460.5h0M308.5 458.8h0M312.6 458h0M309.4 460h0M309.2 460.5h0M312.9 458.7h0M312.6 457.5h0M337.2 460.4h0M336.1 459.1h0M338 457.3h0M333.1 459.3h0M329.7 461h0M331 461.3h0M333.4 464.2h0M334.3 459.7h0M336.7 460.3h0M336.3 460.6h0M341 459.3h0M336.9 460h0M338.3 458.7h0M332.5 460.2h0M335.7 455.6h0M331.3 457.6h0M331.4 460.7h0M334.7 456.4h0M336.7 459h0M333.5 458.5h0M335.2 456.6h0M335.1 457.3h0M331.2 458.3h0M333.1 462.4h0M339.3 459.7h0M332.6 455.9h0M338.6 457.6h0M337.9 460.3h0M335.4 457.3h0M333.6 456.5h0M337.5 456.4h0M336.4 459.2h0M335.6 458.2h0M333.1 458.5h0M333.8 463.7h0M334.1 461.8h0M335.2 459.6h0M336.1 457.9h0M336.3 459.7h0M332.4 460.1h0M152.7 482.7h0M158.2 485.5h0M153.6 489.7h0M155.9 489.1h0M154.6 488.7h0M154.8 490h0M152.3 488.2h0M152.8 487h0M154.8 489.2h0M156.9 482.3h0M155.6 485.3h0M155.4 490.9h0M155.5 486h0M154.5 483.8h0M154.6 487.8h0M153.5 483.2h0M153.2 484.3h0M155.2 490.8h0M155.1 484.3h0M150.7 486.3h0M149.3 486.9h0M154 486.2h0M151.9 489.2h0M153.3 491.7h0M151.7 488.5h0M155.2 480.8h0M152.1 487.4h0M155.9 485h0M151 491.6h0M158.4 483.7h0M155.6 484.2h0M152.2 485.3h0M151.5 488.4h0M150.5 489.9h0M152 485h0M154.1 487.7h0M151.2 488h0M149.9 485.3h0M154.6 486.3h0M150.7 487.6h0M149.9 479.1h0M171.8 482.5h0M180.9 489.6h0M172.1 486.2h0M179.9 484.7h0M178.9 482.5h0M180.4 485.4h0M175.6 482.4h0M180.9 486.7h0M172.7 486h0M174.3 485.1h0M177.4 487.6h0M178.2 485.7h0M180.1 480.8h0M182.9 487.1h0M176.4 482.8h0M180.9 486h0M181 487.8h0M173.2 485.9h0M179.6 484.7h0M174.3 482.2h0M176.6 484.9h0M175.7 483h0M176 488.7h0M177.6 486.4h0M172 485.6h0M180.4 481.8h0M179.3 484.2h0M178.1 484.4h0M179.8 484.3h0M177 486.9h0M177.6 485.9h0M179.7 484.2h0M179.7 485.1h0M177.1 484.7h0M181.6 486.5h0M178.9 484.4h0M180.4 483.8h0M172.1 488.8h0M204.5 488.7h0M209.2 487.1h0M207.5 485.8h0M205.2 489.4h0M204.7 492.7h0M202.6 488.4h0M206.4 490.5h0M202.6 486.3h0M206.4 488.2h0M208.2 486.1h0M204.5 488h0M204 487.8h0M208.6 490.7h0M204 486.9h0M206.2 485.6h0M201.7 489.8h0M206.1 490h0M210.8 485.9h0M205.5 489.4h0M207 484.5h0M207.6 487.9h0M209.1 488.7h0M204.1 489.2h0M206.1 491.4h0M201.9 490h0M204.6 483.9h0M205.7 488.9h0M206.4 489.9h0M207.1 488.1h0M204.5 486.4h0M205.9 485.2h0M204.5 485h0M205.1 488.2h0M206.5 487.2h0M206.5 485.6h0M228.7 485.7h0M227.7 490.2h0M228 485.9h0M232.1 491.4h0M233 491.4h0M228.8 488.4h0M229.5 491.4h0M231.8 485h0M228.5 482.5h0M231.7 485.8h0M231.8 488.3h0M231.1 485.2h0M227 492h0M233.5 486.1h0M229.9 487.5h0M228.9 487.7h0M228.1 485.6h0M229.6 489.3h0M231.1 485.3h0M232.5 488.9h0M231.7 486.1h0M228.8 482.1h0M230 486.5h0M233.3 489.5h0M229.5 486.4h0M232.4 489.3h0M229.6 488.9h0M227.6 491h0M225.5 488.4h0M231 486.6h0M232.1 485.5h0M234.1 486.5h0M230 487.3h0M231.7 486h0M232.3 485.6h0M229.9 483.6h0M228.9 485.3h0M232.4 487.4h0M228.4 487.4h0M230.9 486.2h0M230.1 486.1h0M233.1 492.4h0M255.8 484.6h0M256.3 485.7h0M259.2 482h0M256.5 486.6h0M255.4 482.7h0M260.1 486.5h0M252.9 487.2h0M257.7 488.7h0M252.9 485.9h0M255 480.9h0M257 489h0M256.7 482.2h0M261.2 482.5h0M258 487.5h0M255.8 485.2h0M258.7 487.4h0M256.2 488.8h0M256.3 484.5h0M254.8 485.9h0M256 485.2h0M257.8 485.6h0M261.3 488.7h0M259.2 489.6h0M260.6 487.7h0M258.3 488.4h0M255.9 484.4h0M257.4 484.9h0M261.5 486.8h0M255 482.6h0M256.9 484.3h0M257.6 486.1h0M260.3 485.7h0M258.3 484.1h0M258.5 487.3h0M259.7 482.2h0M259 487.7h0M258.9 482.9h0M251.8 490.7h0M282 485.2h0M285.1 481.3h0M286.3 488h0M285.5 491.8h0M283.3 481.4h0M280.6 486.4h0M283.5 484.2h0M284.4 484.7h0M281.2 478.9h0M282.3 486h0M282.5 483.1h0M283 485.2h0M286.8 489.5h0M285.5 486.5h0M279 483.6h0M283.6 481.9h0M280.6 483h0M287.7 482.9h0M283.5 487h0M280.1 483.8h0M284.2 482.6h0M281.6 485.5h0M280.4 483.2h0M282.9 491.3h0M286.8 491.9h0M283 489.8h0M283.6 485.8h0M281.8 483.3h0M282.2 487.2h0M284.6 484.7h0M282 484.2h0M281 488h0M283.8 485.4h0M282 483.7h0M284.8 486.4h0M281.3 486.8h0M278.5 490.4h0M276.5 487.7h0M307.4 486.5h0M309.4 484.5h0M309 482.8h0M305 486.8h0M306 489.2h0M309.4 485.7h0M308.2 485.6h0M307.4 480.7h0M310.7 482.3h0M310 487h0M308.1 491.6h0M304.8 490.9h0M307.8 485.1h0M308.9 490.7h0M310 487.2h0M309.5 487h0M305.9 486.6h0M307.6 490.8h0M306.2 487h0M311.5 486.3h0M310.6 490.4h0M310.7 489.8h0M310.6 492.5h0M304.3 488.6h0M305.1 483.3h0M313.6 485h0M306.4 488.6h0M308.3 482.8h0M308.5 486.2h0M308 486.3h0M305.9 485.8h0M311.4 489.1h0M308.1 485.6h0M309.2 488.3h0M309.7 484.9h0M308.9 486.9h0M333.6 483.8h0M336.2 488.5h0M339.1 483.9h0M334.4 485.8h0M333.3 484.1h0M335.4 479.4h0M335 485.7h0M329.5 487h0M337 484.3h0M334.4 483.4h0M336.2 487.5h0M336.4 488.8h0M332.9 487.7h0M329.2 485.9h0M334.9 484.6h0M331.9 486.4h0M334.4 481h0M333.2 482.7h0M333.5 489.5h0M334 484.9h0M333.4 479h0M333.7 487h0M336.4 484.4h0M331.4 484.2h0M331 484.4h0M336.5 479.6h0M334.2 486.1h0M331.8 484.3h0M336.3 483.3h0M332.8 483.6h0M333.5 486.3h0M335.3 482.2h0M336.6 484.4h0M333.5 487.9h0M334.2 483.4h0M333.4 484.2h0M330.3 492.3h0M330.3 477.7h0M149 509.3h0M156 512.3h0M156.4 506.8h0M150.2 515.4h0M148.6 511.6h0M151.8 509.3h0M160.6 512.6h0M151.1 512.5h0M150.3 515.4h0M153.3 509.4h0M157.6 507.4h0M157.1 513.2h0M149.5 516.8h0M153.5 510.1h0M151.1 515.3h0M154.9 514.5h0M153 511.4h0M149.6 513.4h0M151.9 514.1h0M154.8 510.7h0M152.9 511.1h0M152.4 511.8h0M147.4 513.6h0M158.8 509.9h0M150.8 513.4h0M153.9 511.7h0M153.4 511.1h0M152 514.6h0M155.2 512h0M151.1 509.9h0M154.8 514.6h0M153.5 511.1h0M151.3 509.9h0M155 511.6h0M156.4 510.5h0M154.7 512h0M160.7 514.4h0M181 509.5h0M177.3 513h0M176.9 506.7h0M184.1 516.7h0M177.3 510.4h0M175.2 508h0M178.5 511.4h0M176.7 508.3h0M174.6 509.9h0M176.5 510.3h0M176.8 510.9h0M179 514.6h0M183.8 514.3h0M181.1 511.3h0M177.2 509.4h0M185.3 511h0M178.2 510.4h0M177.2 510.8h0M179.8 509.5h0M175.4 508.6h0M184.7 508.8h0M182.9 508.1h0M176.4 510.8h0M178.6 508.7h0M180.8 510.1h0M185.3 508.9h0M178.4 512.1h0M179.4 511h0M179.1 511.1h0M180.5 508.1h0M178.6 510.1h0M179.5 512.9h0M180.6 510.5h0M177.5 508.7h0M179.6 511.4h0M179.7 518.4h0M175.9 517.8h0M210.2 512.7h0M201.6 515h0M206.5 512h0M201.5 513h0M206.2 512.8h0M204.7 509.1h0M200.5 510.4h0M206.5 512.8h0M207.3 512.9h0M208.2 509.9h0M204.2 517.5h0M206.8 514.3h0M205.7 513.7h0M204.9 512.7h0M206.2 513h0M205 511.6h0M204.6 516.4h0M205.9 515h0M209.3 514.2h0M211.8 513h0M206.2 514.3h0M207.6 510.8h0M207.2 515.5h0M203.3 514.6h0M204.7 513h0M206.9 514.3h0M206 512.7h0M202.9 511.4h0M202.5 511.7h0M204.1 511.7h0M204.3 510.6h0M205.6 513.5h0M200.9 512.6h0M203.8 513.4h0M207.7 511.8h0M204.3 511.2h0M205 513.6h0M204.9 512.7h0M228.7 510.3h0M228.3 511.9h0M234.5 515.8h0M228.9 513h0M229.1 509.2h0M230.8 516.2h0M235.6 513.4h0M234.6 513.4h0M229.1 513.7h0M234.3 515.4h0M233.7 507.6h0M234.4 511.6h0M232.3 515.8h0M233.7 516.1h0M227.3 510.3h0M231.4 509.4h0M231.1 509.1h0M229.4 508.6h0M230.7 508.9h0M227.6 511.6h0M225.8 510.3h0M235 510.3h0M229.8 511.7h0M232.7 513.6h0M231.1 507.1h0M233.1 516.9h0M231.3 506.2h0M232.2 510.9h0M232.5 509.2h0M229.6 513.6h0M225.2 509.2h0M233.3 512.9h0M230.1 512.7h0M231.5 513.2h0M230.4 511h0M230.3 511h0M233.8 510.8h0M256.1 510.6h0M257.9 506.9h0M259.7 509.9h0M253.8 511.9h0M252.7 514.1h0M259.1 509h0M257.3 515.3h0M252.9 510.7h0M257.7 508.4h0M255.3 509.8h0M257.1 509h0M254.8 512.4h0M257.7 511.2h0M253.1 509.9h0M256 509.6h0M254.1 508.1h0M252.6 512h0M256.2 513.1h0M259.8 507.3h0M259.3 511.5h0M253.6 512.6h0M258 507.5h0M256.2 509.1h0M261.3 512.3h0M257.3 509h0M263 510.2h0M251.5 508.9h0M258.4 512.8h0M258.8 512.1h0M251.8 512.7h0M258 508.4h0M261.7 508.1h0M256.7 511.1h0M255.2 510.5h0M253.7 512.2h0M255.1 512.4h0M258 510.4h0M254.8 511.6h0M257.8 509.3h0M256.6 509.8h0M259 512.1h0M257.7 503.2h0M283.4 512.7h0M282.2 505.6h0M280 511.5h0M284.1 514.1h0M287 512.2h0M280 512.6h0M280.4 514.8h0M281.1 510h0M282.1 513.1h0M283.8 507.9h0M280.5 513.4h0M284.4 510.3h0M280.3 505.6h0M284.5 510.5h0M279.9 510.7h0M281.9 507.5h0M281.2 510.4h0M278.7 511.5h0M282.9 515.4h0M283.7 511.1h0M282.7 513.8h0M282.3 506.5h0M286.3 509.5h0M282 512.3h0M282.5 516.7h0M281.5 513.1h0M281.3 511.6h0M283.4 515.3h0M281.1 510.1h0M282.2 510.1h0M282.6 512.1h0M282.8 510.5h0M284.5 513.7h0M283.1 509.4h0M284.9 511.4h0M274.3 511.3h0M312.8 510.8h0M309.3 509.2h0M308.9 512.1h0M304.4 511.7h0M312.4 510.7h0M307.6 505.4h0M310 512.9h0M306.8 512.9h0M314.4 512.2h0M313.4 513.2h0M311.8 511h0M306.1 510.7h0M304.4 512.4h0M311.3 510.3h0M309.6 514.1h0M307.5 512.6h0M313.2 509h0M308 511.7h0M307.1 512.2h0M309.1 510.5h0M306.6 508.2h0M305.5 512h0M309.8 510.1h0M309.5 510.7h0M314.3 513.1h0M310.2 513.2h0M307.3 510.6h0M307.2 510h0M310 513h0M309.8 508.6h0M311.2 510.1h0M308.9 513.3h0M309.6 511.4h0M309.8 512.2h0M309.2 512.2h0M308.4 512.8h0M309.2 504.8h0M334 511.8h0M335.9 510.5h0M332.3 514.1h0M337 506.5h0M337.4 505.4h0M331.1 513.7h0M337.9 512.7h0M337.1 511.4h0M332.5 515h0M336.3 513.7h0M334.9 510.4h0M334.5 510.4h0M333.6 508.7h0M335.2 509.3h0M336.6 510.8h0M332.2 507.8h0M333.8 508.5h0M332.2 516.2h0M338.7 513h0M334.8 510.6h0M334.8 511.6h0M338 515h0M331.6 509.6h0M334 512.1h0M335.7 519.1h0M337.2 507h0M337.4 512.6h0M337.5 512.9h0M336 512.5h0M336.1 509.4h0M337 508.6h0M337.1 512h0M336.7 512h0M335.9 510.3h0M335.6 512h0M330.3 507.7h0M332.2 519.3h0M153.4 539.5h0M153.5 538.8h0M152.2 538.8h0M158.6 539.9h0M156.2 535.4h0M149 532.6h0M158.7 538.6h0M153.1 534.7h0M152.3 530.7h0M154.4 536.2h0M154.5 534.5h0M153.5 543.8h0M154 532h0M154 542.6h0M159.2 539.3h0M156.7 533h0M156.8 535.4h0M147.7 534h0M158 534.2h0M147.9 538.4h0M149.9 531.7h0M154.5 544.2h0M155.2 535.8h0M155.5 536.5h0M152.4 539.6h0M151.5 539.2h0M158.2 538.4h0M154.5 534.3h0M157.5 534.4h0M154.3 530.7h0M156.3 536.2h0M155.2 541.3h0M154.1 535.5h0M150.8 535h0M153.4 536.6h0M153.1 536.8h0M155.6 538.6h0M151.5 537.8h0M152 537.1h0M153.7 538.2h0M154.6 534.9h0M148.7 544.4h0M178.9 538.3h0M178.8 540h0M174.5 534.9h0M178 536.4h0M178 542.8h0M178 541.7h0M181.1 533.2h0M181.4 533.3h0M173.6 538.9h0M175.1 539.4h0M177.1 540.5h0M177.1 542.2h0M179.1 540.1h0M178 537.2h0M182.4 533.9h0M180.1 535.4h0M177.1 544.7h0M179.2 538.2h0M181.1 536.7h0M177 541.7h0M181.9 537.3h0M178.1 534.7h0M183.7 537.4h0M179.9 535.3h0M177.7 539.6h0M179.3 542.4h0M180.8 535.5h0M182.2 540.7h0M181.8 539.5h0M179.6 538.8h0M180.8 541.4h0M178.9 537.9h0M176.4 537.4h0M179.8 538.9h0M178.2 536.2h0M177.7 541.1h0M177.7 540.4h0M174.3 540.6h0M206.8 540.8h0M208 540.2h0M204.7 542.6h0M206.6 540h0M206.3 538.5h0M202.8 536.4h0M210.2 534.4h0M208.7 532h0M207.8 538.6h0M207.3 536.9h0M207.3 541.4h0M209.2 531.9h0M203.3 533.3h0M203.9 535.9h0M208.1 539.1h0M202.1 544.1h0M207.4 534.7h0M204.7 536.1h0M206 538.9h0M202.6 537.2h0M209.4 534h0M205 536.7h0M203 533.3h0M202.7 532.5h0M206.5 539.2h0M205.4 537.5h0M206.1 532.1h0M202.4 536.3h0M200.4 532.1h0M208 535.9h0M207.3 539.3h0M207 535.3h0M204.6 534.4h0M206 538.9h0M205.1 535.4h0M206.7 539.1h0M207.1 535.7h0M206.4 536.7h0M207.9 531.4h0M208.9 545.9h0M235.1 541.6h0M230.8 537.7h0M233.3 538h0M232.9 536.6h0M232.7 541.4h0M234.6 541h0M229.2 536.9h0M230 539.4h0M228.9 536.9h0M224.9 537.8h0M228.4 539.3h0M231.4 534.4h0M229.2 539.8h0M227.5 540.8h0M231.1 540.8h0M235.4 536.9h0M229 539.3h0M233.1 534.9h0M230.2 538.5h0M227.2 538.2h0M224.5 535.2h0M229.8 535.5h0M231.3 540.2h0M236.9 536.5h0M235 538.5h0M227 538.1h0M234.5 536.4h0M231.9 532.4h0M227.4 539.2h0M229.9 535h0M230.3 539.6h0M233.1 537.4h0M230.8 536.6h0M232.4 540.3h0M230.9 539.3h0M232.3 537.4h0M231.7 538.1h0M228 540.2h0M229 539h0M231.4 537.3h0M237.8 536h0M259.8 540.8h0M254 537.6h0M256.6 538.1h0M259.1 537.2h0M258.2 537.4h0M262.6 539h0M262.9 537.7h0M253.1 537.4h0M259.6 538.7h0M258.6 537.1h0M261.9 537.4h0M257 539.8h0M256.7 530.7h0M262.4 534.2h0M259.8 532.9h0M261.3 534.5h0M255.9 535h0M254.2 540.4h0M261 536.2h0M256 541.7h0M260.4 537.9h0M259.6 539.3h0M259.5 540.2h0M256.1 539.1h0M253.9 532.7h0M257.4 542.8h0M259 534.4h0M256.9 534h0M263.9 533.7h0M258.5 538h0M258.8 535h0M258.4 534.3h0M259.8 539.7h0M257.2 537.2h0M260 538.5h0M257.6 536.7h0M259.7 532.8h0M260.4 538.2h0M263.8 531.9h0M282.4 537.7h0M279.7 537.7h0M282.8 538.6h0M285.6 544h0M281.7 533h0M283.3 542.2h0M283.6 542.6h0M285 532.8h0M283.2 538.9h0M287.3 534.3h0M281.5 542.7h0M282.3 531.2h0M283.3 536.1h0M282.8 534h0M287.1 536.3h0M282.4 537.6h0M285 532.6h0M277.8 537.4h0M284.1 536.1h0M282.9 539.4h0M281.5 541.1h0M279.7 530.7h0M282.3 543.1h0M280.5 541.3h0M284.1 534.5h0M280.8 540.8h0M282.5 531.3h0M287.1 538.7h0M281.1 538.7h0M283.8 532.9h0M281.4 539h0M283.7 536.9h0M282.7 536.9h0M284.5 537.7h0M284 538.4h0M280.1 535.5h0M279.8 536.7h0M281.1 535.4h0M279.9 538h0M290.6 538.6h0M307 541.8h0M306.2 539.6h0M311 537.7h0M305.5 535h0M308.9 538.9h0M308.3 535.8h0M308.2 534.8h0M312.4 535.9h0M308.7 537.4h0M305.7 541.2h0M311.1 538.9h0M309.5 529.8h0M308.5 541.9h0M305.4 536.2h0M310.6 538.3h0M308.9 538.5h0M313.3 539.4h0M303.1 539.2h0M310.2 538.4h0M312.3 536.7h0M308.7 536.7h0M312.7 541.9h0M307.3 540.1h0M308 537.7h0M307.7 542.4h0M312.4 533.2h0M309.8 534.9h0M308.4 540.1h0M311.8 537.7h0M308.7 539.3h0M307.9 539.9h0M312.5 537.6h0M309.9 539h0M310.6 538h0M312.8 538.3h0M304.8 532.5h0M301.1 535.5h0M334 541.5h0M337.6 540.3h0M336.6 537.3h0M338.8 540.4h0M337.5 538.5h0M327.6 540.5h0M338.4 536h0M328.3 538.7h0M332.5 535.8h0M332.4 531.4h0M329.2 540.9h0M338.6 536.8h0M339.4 537.1h0M333.4 538h0M332.1 539.7h0M330.4 540.7h0M335.4 536.8h0M331.3 540.1h0M338.4 539h0M337.8 532.7h0M334.3 541.2h0M334.7 540.1h0M334.1 533h0M328 539.2h0M335.7 543.7h0M335.4 535h0M331.8 537.2h0M335.5 538.7h0M331.9 537.1h0M332.7 534h0M335 538.8h0M336.9 539.2h0M333.8 536.6h0M334.5 538.2h0M331.5 538.1h0M335.7 538.2h0M336.3 538.9h0M335.8 538.2h0M334.1 541.4h0M335.9 537.1h0M339.9 544.1h0M147.1 564.1h0M152.1 564.2h0M158.7 561.6h0M156.4 566.3h0M147.7 561.3h0M152 563.1h0M149.4 565.2h0M151.9 560.7h0M153.9 559.3h0M148.5 565.5h0M154.1 559.9h0M154.7 557.8h0M152 567.1h0M150.6 565h0M149.8 561.5h0M149.9 562.3h0M149.2 566.4h0M153.4 561h0M159.6 560.6h0M151.7 566.8h0M149.5 566.1h0M149.1 566.5h0M154 560.6h0M148.9 565.4h0M154.1 557.5h0M153.4 564.5h0M154.6 566.8h0M149.9 564.9h0M153 564.2h0M155.6 563.8h0M152.2 565.3h0M150.3 561.2h0M154.2 562h0M152.1 563h0M150.6 561.1h0M151.8 562.6h0M151.2 564.5h0M153.4 562.4h0M155.3 564.2h0M150.4 557.6h0M179 565.8h0M180.8 561.5h0M181.6 565.1h0M178.8 563.7h0M180.7 564.9h0M175.7 562.1h0M181.9 565.5h0M182.2 566.6h0M176.8 568.3h0M178.4 570.2h0M176.8 563.1h0M181.1 565.3h0M176.2 563.6h0M178.8 563.5h0M177.1 564.1h0M178.8 564h0M178.1 562h0M175.3 562.4h0M179.3 562.8h0M178.1 565.1h0M180.3 564.8h0M179.2 567.3h0M176.1 558.6h0M180 565.9h0M178.5 567.5h0M176 562.8h0M182.9 564.4h0M185.5 563.4h0M174.9 567.4h0M178.3 564.3h0M179.4 563.7h0M180.1 564.2h0M177.8 568.1h0M179.9 562.8h0M175.7 563.5h0M179.6 561.9h0M178 564h0M178.9 566.4h0M185.9 558.8h0M202.4 562.3h0M202.5 559.7h0M205.3 562.4h0M208 563.3h0M204.6 558.1h0M204.6 563h0M204.7 558h0M208.2 562.4h0M198.7 565h0M206 563.7h0M202.9 556.3h0M201.5 563h0M204.3 568.9h0M200 562.4h0M202 559.2h0M205.6 563.2h0M202.4 562.7h0M203.6 562.5h0M201.8 564.4h0M204 561.6h0M208.7 557.6h0M206 560.5h0M207.2 562.4h0M201.3 563.8h0M202.8 567.3h0M201.8 563.9h0M204.2 568.1h0M207 565.7h0M202.6 560.9h0M205.3 562.5h0M204.4 561.4h0M204.2 565.7h0M201.8 560.9h0M205.8 561.3h0M204.4 563h0M201.8 562.2h0M204.2 563.4h0M229.4 557.8h0M233.2 562.9h0M237.7 560.4h0M233.3 564.5h0M228.9 562.5h0M228.4 564.1h0M231.6 563.6h0M233.3 563.5h0M235.4 564.6h0M230.8 561.1h0M233 559.2h0M229.6 565h0M234.4 567.7h0M230.7 562.5h0M234.4 565.7h0M227.8 565.2h0M232.3 566.9h0M232.1 561.8h0M229.9 562h0M230.2 558.7h0M232.3 561.2h0M235.6 564.7h0M230 562.3h0M233.1 565.7h0M235.2 564.9h0M231.8 564.6h0M228.1 564.1h0M231.6 562.4h0M231.5 561.7h0M231.1 565h0M230.8 560.7h0M232.5 562.2h0M230.8 565h0M231.6 563.7h0M232.1 565.5h0M232.8 560.5h0M225.6 567.4h0M259.3 569.8h0M259.5 563h0M256.8 565.5h0M253.1 563h0M252.8 566.2h0M251.9 562h0M257.4 565h0M253.6 565.2h0M255.5 567.7h0M256.5 566.4h0M251.9 563.4h0M257.7 562h0M250.4 564.3h0M260.7 563.9h0M258.7 566.5h0M255.5 562.2h0M262 567.4h0M258.1 563.9h0M252.5 563.7h0M256.1 564.9h0M257.9 560h0M255.4 564.2h0M255.4 564.5h0M257.6 564.3h0M254.3 567.8h0M257.3 565.3h0M258 565.2h0M251.5 561.7h0M257.1 565h0M256.8 562.5h0M256.2 564.9h0M256.8 568.4h0M257.6 565h0M256.4 560.8h0M258.1 563.1h0M258.7 563.6h0M256.2 565.9h0M256 557.8h0M278.5 565.7h0M282.1 568.9h0M278.4 567h0M282.8 559.9h0M281.1 568.9h0M283.4 565h0M280.2 565.5h0M284 559.5h0M282.2 563.8h0M276.1 564.9h0M281.1 562.5h0M278.8 571.1h0M282.4 560.6h0M284 562.4h0M282.1 564.9h0M286.5 567.2h0M283.4 568h0M278.6 569.2h0M283.4 564.9h0M281.4 566.2h0M280.1 563.5h0M285.3 563.4h0M284.6 562.6h0M280.4 560.7h0M283.3 565h0M281.3 566.2h0M281.3 567h0M285 561.4h0M283.9 563.1h0M284.9 563h0M284.9 560.8h0M284.2 563.9h0M279.9 565.2h0M283.8 562.3h0M282.1 565h0M307.7 562.6h0M312.1 560.1h0M307.2 565.3h0M305.2 564.9h0M312.3 560.7h0M307.4 564.7h0M312 559.3h0M304 566.9h0M303.2 557.2h0M309.8 562.2h0M308.3 562.8h0M311.1 562.3h0M309.6 565.9h0M313.3 561.4h0M312.2 560.1h0M305.5 561.2h0M308.2 562.4h0M314.4 568.1h0M309.8 564.7h0M303.4 561.8h0M313.3 565.8h0M307.9 562.1h0M303.1 566.8h0M308.8 561.1h0M308 561.8h0M306.2 563.6h0M312.8 562.8h0M312.7 562.5h0M308.8 562.3h0M312.1 560.4h0M304 565.7h0M310.5 561.9h0M311.1 562.9h0M309.4 562.1h0M308.3 562.4h0M310.6 563.3h0M311.3 560.9h0M308.2 560.2h0M309.2 564.4h0M309.4 563.6h0M309.8 564.1h0M335.8 563.3h0M338.6 565.9h0M335.3 565.6h0M337.4 565.5h0M330.9 563.1h0M333.7 563.6h0M337.4 570.9h0M336.2 563.9h0M335.7 559.6h0M330.6 563.7h0M335 560.2h0M335.1 563.6h0M336.8 569.1h0M335.7 567.5h0M334.9 561.2h0M333.4 564.4h0M336.7 561h0M340.4 563.6h0M330.5 563.2h0M333.9 561.2h0M332.8 561.3h0M335.2 562.1h0M336.1 562.7h0M333.2 562.2h0M337.2 567.7h0M337.4 561.4h0M332.7 562.3h0M335.8 560.1h0M333.9 563.8h0M334.1 565.1h0M335.7 564.1h0M334.9 562.4h0M334.2 560.9h0M334 562.4h0M336.1 562.1h0M337.8 564.5h0M333.2 564.1h0M342.6 561.5h0M339.5 570.4h0M155.9 585.8h0M153.1 585.9h0M157.4 589.2h0M151.3 588.7h0M156.3 594.4h0M153.8 588.1h0M150.5 590.4h0M150.4 587.2h0M156.2 588.2h0M148.5 584.8h0M152.2 585.3h0M150.8 590h0M150.6 583.8h0M151.9 590.9h0M150.4 589h0M157.2 588.5h0M151.8 590.6h0M154.7 587.6h0M153.3 588h0M153.2 589.6h0M154.5 587.5h0M153 589.5h0M150.9 592.4h0M154.3 583.5h0M157.4 589.3h0M154.7 588.6h0M156.7 588.8h0M153.1 593.3h0M156.1 587.6h0M157 593.9h0M155 585.2h0M153.7 588.5h0M154.1 588.9h0M155.8 588.9h0M152.7 588h0M153.8 589.4h0M151.4 587.1h0M154.8 588.3h0M155 588.3h0M152.3 589.3h0M147.2 589.2h0M179.6 589.6h0M175.6 587.3h0M181.7 592.6h0M181.7 588.4h0M173.3 588.4h0M177.9 588.1h0M172.3 590.1h0M185.1 589.3h0M178.1 589.1h0M179.3 592.9h0M179.2 590.1h0M182.8 588h0M178.9 590.2h0M181.3 588.9h0M179 587h0M180.1 588.1h0M185.1 592.3h0M183.3 591.3h0M177 591.5h0M175.8 594.2h0M182.6 587.7h0M185.4 588.4h0M179.3 588.2h0M180.3 588.9h0M178.5 588.8h0M182.3 589.8h0M175.6 594h0M182.4 592.2h0M179.2 589.5h0M179.3 588.3h0M181 589.2h0M175.9 592h0M181.6 591.8h0M180.2 591.1h0M181.6 592.5h0M176.8 591.3h0M185.6 594h0M203.1 586.6h0M203.1 595.2h0M202.5 591.2h0M209.6 586h0M206.7 590.6h0M204.8 591.5h0M203.1 591.9h0M199.9 589.7h0M200.4 588.9h0M198.8 591.6h0M208.7 585.4h0M200.6 589.2h0M204.7 586.4h0M204.9 589.3h0M205.4 587.5h0M205.5 594.6h0M201.9 590.9h0M207.2 584.3h0M206.7 589.9h0M204 590.5h0M199.4 589.2h0M202.8 589h0M206.5 586.4h0M198.4 588.3h0M207.6 583.9h0M200.8 585.4h0M200 586.4h0M212 587h0M207.1 591.4h0M209.3 584.7h0M205.2 587.3h0M203.3 594h0M203.5 586.2h0M204.8 590.4h0M206.5 585h0M205.5 588.2h0M203.8 586.8h0M203.8 589.2h0M205.8 590h0M203.4 588.7h0M203.3 590.1h0M209.2 596h0M231.4 588.7h0M232.8 590.8h0M229.1 584.5h0M230.1 587.5h0M235.7 591.8h0M233.2 589.2h0M231.4 592.4h0M231.6 595.1h0M229.3 591.4h0M228.9 591.5h0M234.3 589.2h0M232 587.6h0M229.8 590.8h0M231 585.7h0M232.4 590.5h0M229.5 592.5h0M229.8 592.2h0M232.4 586.3h0M225.7 589.6h0M229.7 592.7h0M232.9 594.4h0M230.9 587.5h0M233.5 589.5h0M227.9 592.3h0M231.1 596.5h0M229.1 590.8h0M228.5 593.6h0M230.4 586.5h0M230 589.1h0M231.1 590.5h0M228.7 589.1h0M228 591.9h0M232.2 589.3h0M227.8 591.9h0M231.1 590.5h0M232.3 591h0M235 597.4h0M224 588.2h0M258.8 588.4h0M255.3 590.7h0M259.8 591.8h0M253 587.3h0M258.3 587.5h0M259.9 594.7h0M263 592.2h0M253.4 590h0M260.9 587.9h0M254.5 588.4h0M262.3 593.3h0M258.7 589.5h0M259.9 590.1h0M262.5 593h0M257.7 590.9h0M260.3 586.3h0M256.9 589.4h0M258.3 588.3h0M259.5 587.3h0M257.8 587.6h0M251.6 588h0M259.6 591.9h0M261.7 589.8h0M252.6 586.2h0M259.2 585.7h0M261.6 587.1h0M257.4 589.5h0M259.7 589.6h0M257.8 588h0M256.9 589.7h0M258.1 590.3h0M256.7 589.4h0M255.4 589.6h0M257.4 588.4h0M256.2 590.2h0M257.5 590.6h0M257 597h0M280.7 589.8h0M281.4 586.5h0M284.5 585.8h0M282.1 588.5h0M280 592.1h0M283.3 588.6h0M288.5 588.9h0M281.6 589.2h0M285.6 586.3h0M280.7 590.1h0M278.4 591.9h0M283.1 593.3h0M277.4 590.1h0M281.7 588.1h0M280.8 590.9h0M278.4 587.5h0M285.7 585.1h0M280.1 588.4h0M281.4 588.8h0M285.6 588.4h0M279.8 585.5h0M284.3 590h0M277.7 589h0M280.5 589.5h0M277.7 587.8h0M280.1 589.6h0M288 589h0M283.9 591.8h0M280.3 591.6h0M278.5 592.7h0M281.8 592.3h0M282.1 590.4h0M282.4 588.5h0M281.3 591h0M284.8 589.2h0M282.1 588.7h0M284.2 589.6h0M282.1 589.1h0M282.3 590.1h0M281.3 588.1h0M275.8 588.6h0M309.2 592h0M306.6 587h0M315.1 589.4h0M313 589.1h0M308.3 592h0M314.7 586.7h0M309.8 593h0M312.1 589.6h0M309.7 589.1h0M311.1 586.9h0M308.8 586.4h0M314.4 584.8h0M311.5 591.7h0M312.3 590.7h0M310 584.4h0M311.8 589.7h0M308.7 591.1h0M310.4 590.4h0M307.9 591.3h0M307.5 583.2h0M308.5 588.9h0M306.4 591.8h0M312.6 589.2h0M307.9 593.9h0M309.3 589.5h0M309.1 590h0M309.5 587.8h0M313.1 590.9h0M308.3 591.4h0M304.8 589.2h0M314.7 589.2h0M309.2 590.2h0M310.5 587h0M311.1 590.5h0M310.3 589.9h0M309.8 588.5h0M308.2 588.6h0M310.1 590.3h0M310.8 597.3h0M333 592h0M332.4 588.8h0M334.3 595.1h0M334.6 591.6h0M333.4 587h0M338.2 587.7h0M333.9 587.6h0M338.4 587h0M336.7 586.6h0M335.7 583.8h0M335.4 588.6h0M338.4 587.9h0M336.7 587.7h0M337.9 586.5h0M335.4 591.2h0M336.1 595.5h0M339.8 590.5h0M336.1 595.5h0M331.1 585.5h0M336.4 589h0M335.9 591.2h0M334.5 592.7h0M335 583h0M333.7 586.9h0M336.7 589.1h0M336 587.6h0M334.9 591.1h0M335.7 590.8h0M336.6 587.4h0M334.2 588.7h0M335.5 587h0M334.7 586.2h0M332.3 592.6h0M334.8 588.5h0M335 588.5h0M327.7 593.6h0" fill="none" stroke="#8c8c8c" stroke-width="3.3" stroke-linecap="round"/>
<rect x="354.5" y="397.5" width="16" height="203.5" fill="#ececec" stroke="#dcdcdc" stroke-width="1"/>
<path d="M371 397.5h5M371 407.68h3.5M371 417.85h3.5M371 428.02h3.5M371 438.2h3.5M371 448.38h5M371 458.55h3.5M371 468.73h3.5M371 478.9h3.5M371 489.07h3.5M371 499.25h5M371 509.43h3.5M371 519.6h3.5M371 529.77h3.5M371 539.95h3.5M371 550.12h5M371 560.3h3.5M371 570.48h3.5M371 580.65h3.5M371 590.83h3.5M371 601h5" stroke="#cfcfcf" stroke-width="1" fill="none"/>
<rect x="355" y="412" width="15" height="5" fill="#cfe0f1"/>
<rect x="355" y="521" width="15" height="5" fill="#4583c4"/>
<rect x="355" y="526" width="15" height="5" fill="#b3cdea"/>
<rect x="355" y="531" width="15" height="5" fill="#9bbce2"/>
<rect x="355" y="536" width="15" height="5" fill="#e3ebf6"/>
<rect x="355" y="541" width="15" height="5" fill="#e9eff8"/>
</svg>
<div class="t" style="left:119px;width:20.5px;text-align:right;top:391.5px;font-size:10px;color:#555">8</div>
<div class="t" style="left:119px;width:20.5px;text-align:right;top:416.9px;font-size:10px;color:#555">6</div>
<div class="t" style="left:119px;width:20.5px;text-align:right;top:442.4px;font-size:10px;color:#555">4</div>
<div class="t" style="left:119px;width:20.5px;text-align:right;top:467.8px;font-size:10px;color:#555">2</div>
<div class="t" style="left:119px;width:20.5px;text-align:right;top:493.2px;font-size:10px;color:#555">0</div>
<div class="t" style="left:119px;width:20.5px;text-align:right;top:518.7px;font-size:10px;color:#555">-2</div>
<div class="t" style="left:119px;width:20.5px;text-align:right;top:544.1px;font-size:10px;color:#555">-4</div>
<div class="t" style="left:119px;width:20.5px;text-align:right;top:569.6px;font-size:10px;color:#555">-6</div>
<div class="t" style="left:119px;width:20.5px;text-align:right;top:595px;font-size:10px;color:#555">-8</div>
<div class="t" style="left:127px;width:30px;text-align:center;top:602px;font-size:10px;color:#555">-8</div>
<div class="t" style="left:152.5px;width:30px;text-align:center;top:602px;font-size:10px;color:#555">-6</div>
<div class="t" style="left:178px;width:30px;text-align:center;top:602px;font-size:10px;color:#555">-4</div>
<div class="t" style="left:203.5px;width:30px;text-align:center;top:602px;font-size:10px;color:#555">-2</div>
<div class="t" style="left:229px;width:30px;text-align:center;top:602px;font-size:10px;color:#555">0</div>
<div class="t" style="left:254.5px;width:30px;text-align:center;top:602px;font-size:10px;color:#555">2</div>
<div class="t" style="left:280px;width:30px;text-align:center;top:602px;font-size:10px;color:#555">4</div>
<div class="t" style="left:305.5px;width:30px;text-align:center;top:602px;font-size:10px;color:#555">6</div>
<div class="t" style="left:331px;width:30px;text-align:center;top:602px;font-size:10px;color:#555">8</div>
<div class="t" style="left:377.5px;top:392px;font-size:10px;color:#555;transform:scaleX(.93);transform-origin:0 50%">0</div>
<div class="t" style="left:377.5px;top:442.9px;font-size:10px;color:#555;transform:scaleX(.93);transform-origin:0 50%">10</div>
<div class="t" style="left:377.5px;top:493.8px;font-size:10px;color:#555;transform:scaleX(.93);transform-origin:0 50%">20</div>
<div class="t" style="left:377.5px;top:544.6px;font-size:10px;color:#555;transform:scaleX(.93);transform-origin:0 50%">30</div>
<div class="t" style="left:377.5px;top:595.5px;font-size:10px;color:#555;transform:scaleX(.93);transform-origin:0 50%">40</div>
<div class="ct" style="left:491px;top:365px;transform:scaleX(1.03);transform-origin:0 50%">Remote Constellation Diagram</div>
<div class="ct" style="left:691px;top:365px;transform:scaleX(.94);transform-origin:0 50%">CINR (dB)</div>
<div class="lb" style="left:491px;top:380px">POWER</div><div class="vl" style="left:527px;top:379.5px">-65 dBm</div>
<div class="lb" style="left:579px;top:380px">CINR</div><div class="vl" style="left:615px;top:379.5px">26 dB</div>
<svg width="1201" height="630" viewBox="0 0 1201 630">
<path d="M492 397V600.5M492 397H696M543 397V600.5M492 447.875H696M594 397V600.5M492 498.75H696M645 397V600.5M492 549.625H696M696 397V600.5M492 600.5H696" fill="none" stroke="#dcdcdc" stroke-width="1" stroke-dasharray="4 2" shape-rendering="crispEdges"/>
<path d="M510.7 421.3h0M517 414h0M512.6 422h0M511.5 425.3h0M514.5 418.6h0M515.2 425h0M516.7 415.7h0M513.3 419.5h0M513.7 417.8h0M511.8 420.4h0M513.5 423.4h0M511 413.4h0M513.6 413.6h0M513.1 413.4h0M512.8 416.2h0M514.5 425.1h0M517.9 421.9h0M511.6 418.2h0M512.6 418.9h0M516.7 419.2h0M516.3 421h0M515.8 424.9h0M514 421.8h0M515.9 422.6h0M514.5 422.9h0M512.4 424.2h0M516.1 419.4h0M512.6 422.2h0M515.5 425h0M512.4 421.4h0M513.2 420.3h0M515.5 419.6h0M512.1 418.5h0M514.7 421.5h0M515.3 420.8h0M514.9 420.2h0M514 420.4h0M516.5 418.6h0M512.6 422.3h0M514.1 420.7h0M515.1 417.3h0M564.8 418.7h0M567.7 423h0M563.4 421h0M562.2 417.5h0M569.6 421.1h0M563.5 412.2h0M565.5 420h0M572 420.8h0M564.6 419.5h0M569.1 414.4h0M564.6 424.2h0M570.6 419.6h0M564.3 417.5h0M568.8 423.8h0M563.1 421.5h0M562 421.5h0M564.9 415.3h0M565.1 423.1h0M567.2 420.8h0M563.2 412.6h0M565.2 415.5h0M568.2 419.4h0M568 420.8h0M564.7 417.5h0M565.4 421.2h0M565 416.4h0M558.8 417.2h0M570.4 422.3h0M567 414.5h0M566.2 418.6h0M569.4 418.7h0M564.6 414.4h0M568.1 418.6h0M563.3 418.6h0M563.3 423.9h0M567.7 419.2h0M565.6 414.9h0M565.7 415.8h0M561.1 424.8h0M616.7 421.2h0M622 420.4h0M620.3 420.4h0M619.5 419.6h0M624.1 419h0M617.3 423.3h0M625.1 419.3h0M625.8 420.9h0M624.6 420.5h0M621 420.5h0M620.2 421.4h0M621.5 425h0M627.5 419.2h0M622.7 419.4h0M625.2 422.4h0M622.1 423.3h0M618.4 422.8h0M621 417.9h0M621 416.7h0M620.6 425.5h0M620.7 419h0M619.4 416.1h0M621 419.3h0M625 415.1h0M620.5 420.7h0M615.9 422.4h0M618.5 419.2h0M616.5 424.1h0M624.3 417.9h0M620.5 418.5h0M622.9 418.9h0M620.4 423.5h0M621.3 422.9h0M621.1 419.6h0M620.3 422.6h0M619.6 419.8h0M620.8 421.3h0M621.9 419.5h0M624.3 412.2h0M675.3 419.2h0M674 416.8h0M670.6 423.3h0M675.1 419.6h0M670.6 417.3h0M677.1 419.5h0M678.7 416.3h0M672.5 412.4h0M673 420.9h0M672.1 425.5h0M669.2 420.8h0M680.3 416.3h0M672.2 414.4h0M674.1 425.9h0M672.1 423.7h0M675.4 418.6h0M678.1 420.4h0M678.6 417.4h0M667.7 418.7h0M671.2 425h0M677 414.5h0M670.4 413.4h0M674 422.4h0M669.6 421.8h0M677.4 414.7h0M673.4 418.3h0M673.8 420.2h0M674.4 420.8h0M670.4 413.6h0M671 419.9h0M670.5 419h0M674.3 417.2h0M674.8 418.6h0M673.7 419h0M673.4 421.1h0M672.4 421.7h0M671.8 417.7h0M674.2 417.5h0M672.4 420.7h0M670.9 425.3h0M513.1 469.7h0M517.6 472.6h0M507.1 469.5h0M510.9 466.9h0M513.7 469.3h0M510.8 467.6h0M519.4 472.6h0M511.2 472.7h0M514.5 473.9h0M519.2 468.4h0M510.6 468.8h0M512.9 474.6h0M515.4 471h0M514 470h0M513.1 472.6h0M513.8 467.8h0M508.9 471h0M515.8 475.7h0M514.8 474.4h0M512.4 472h0M510.5 467.6h0M509.9 470.4h0M511.8 468.9h0M512.4 474.5h0M512.6 466.4h0M517.9 469.8h0M515.9 470.2h0M516.1 466.2h0M516.6 470.9h0M512.1 473.8h0M514.6 476.1h0M514.1 469.9h0M513.7 473h0M513.4 471.2h0M514.3 469h0M513.7 469.6h0M511.5 471.8h0M514.6 470.6h0M521 465.7h0M569.8 470.7h0M568.1 476.6h0M567.2 463.5h0M564.5 468.5h0M565.8 473.3h0M565 473.7h0M568 466.8h0M564.9 476.5h0M566.3 472.8h0M562.5 468.8h0M563.6 470.1h0M561.1 468.6h0M566.9 473.7h0M563 468.6h0M558.8 468h0M566.1 469.1h0M568.9 470.5h0M566.1 477.7h0M573.2 473.9h0M569.9 474.8h0M563.6 474.6h0M560.1 469.5h0M564.5 471.3h0M567.6 469.9h0M567.6 472.5h0M561.7 470.2h0M562.4 469.3h0M564.9 472.9h0M563.1 476h0M564.5 471h0M573.3 473.8h0M567.1 471.6h0M565.4 475h0M565.7 472h0M565.2 471.5h0M567.7 471.8h0M564.9 470.9h0M567.2 472h0M565.3 470.6h0M566.9 471.7h0M564.3 471.6h0M562.4 466.1h0M624.6 465.2h0M624.5 466.7h0M616.5 474.7h0M620.2 470.7h0M619.7 472.6h0M619.2 468.1h0M619.9 465.2h0M615.4 475.9h0M618 466h0M621.5 467.8h0M614.8 468.5h0M620.7 467.7h0M622 470.2h0M618.5 473.3h0M618.4 472.5h0M622.4 471.1h0M621.7 476h0M615.2 475.9h0M619.4 471.9h0M620.6 474.1h0M618.9 464.3h0M615.2 470h0M620.3 476.4h0M618.4 464.2h0M622.9 473.2h0M615.6 474h0M619 467.9h0M617.2 474.7h0M620.4 471.7h0M618.3 468.9h0M619.1 472.6h0M616.8 471.8h0M613.8 469.4h0M621.7 469.7h0M619.3 471.2h0M621.4 468.7h0M618.1 469.4h0M612.9 465.2h0M670.4 475h0M674 471.2h0M671.8 471.6h0M676.2 466h0M670.3 471.3h0M672.9 470.9h0M677.7 471h0M677.2 470h0M675.8 468.4h0M674 465.4h0M674.3 471.4h0M668.5 471.2h0M679.5 469.5h0M671.7 468.9h0M671.1 466.6h0M674.7 465.8h0M672.1 472.6h0M679.1 467.3h0M672.8 473.5h0M674.4 468.9h0M674 471.5h0M670.2 471.8h0M677.8 466.2h0M672.5 465.9h0M672 471.2h0M675.4 470.4h0M672.7 466.1h0M676.3 471h0M675.1 471.5h0M674 468.8h0M676.1 472h0M670.9 468.8h0M677.5 469h0M671.5 471.4h0M673.7 471.6h0M671.2 472.5h0M675.2 469.5h0M677.1 464.9h0M510.3 520.5h0M512.9 523.3h0M517.6 521.3h0M513.8 525.6h0M510.6 522h0M511.4 519h0M513.6 519h0M517.2 529.1h0M515.4 524.3h0M517.5 530.5h0M515.9 525.3h0M513.9 523.3h0M516.8 521.4h0M513.1 527h0M516.9 522.3h0M516.5 522.8h0M507.1 526.2h0M514.5 521.3h0M510.1 520.8h0M515.4 519.8h0M507.6 524.3h0M514.1 518.9h0M519.3 522.6h0M522.1 524.5h0M513.6 521h0M515.8 520.1h0M510.5 524.4h0M515.2 530.8h0M517.6 527.2h0M514.4 527.4h0M511.3 524.5h0M515.6 525.8h0M514.1 525.9h0M512.7 523h0M514.6 525.7h0M512.3 525.7h0M514.7 524.9h0M515.1 525.8h0M514.6 526.3h0M513.9 523.1h0M514.5 526.2h0M507.2 530.2h0M564.8 518.7h0M572.6 522.1h0M563.8 530.7h0M567.1 522.7h0M563.3 529.6h0M567.7 531.3h0M572.6 527.1h0M564.6 530.8h0M570.5 531.8h0M569 529.3h0M564.9 524.9h0M569.5 528.6h0M569.4 525.8h0M569.7 531.6h0M563.7 529.4h0M570.8 522h0M565.9 530.2h0M566 526.2h0M568.4 527.4h0M565.5 527.6h0M570.8 521.8h0M569.9 530.6h0M564.6 530.8h0M569.5 520.6h0M567.2 527.9h0M563.5 526.8h0M570.7 526.6h0M566.5 529.3h0M568.6 519.3h0M567.9 528.9h0M566.6 520.5h0M567 531.2h0M568.4 525.5h0M569.4 527.1h0M566.7 522.9h0M568 524.5h0M564.9 526.3h0M567.4 523.5h0M567.7 526h0M568.3 522.1h0M569.3 523.1h0M566.1 532.2h0M617.5 524h0M617.3 525.4h0M618.6 522.1h0M623.5 524.2h0M620.5 523.1h0M621.8 524.2h0M622.1 524.2h0M619.4 524.4h0M623.7 519.8h0M619.2 524.9h0M617.2 527.6h0M621.3 526.6h0M620.7 531h0M618 524.9h0M615.4 524.9h0M624 520h0M625.3 523.5h0M622.9 523.8h0M620.8 526.4h0M616.8 528.1h0M619.1 523.3h0M619.4 521.8h0M622.3 523.3h0M620 522.2h0M614.9 526.3h0M618 522.3h0M619.5 522.8h0M624 523.5h0M619.1 524.1h0M625.3 522.3h0M619.1 521h0M619.7 524.4h0M618.6 522.3h0M621.3 526h0M618.8 525.3h0M622.8 526.4h0M619.7 527.9h0M626.4 523.5h0M626.4 520.3h0M671.8 525.9h0M674 525.2h0M673.7 521.9h0M675.4 522.6h0M674.1 529.8h0M676.8 523.1h0M666.9 524.9h0M681.3 523.8h0M675.4 531h0M680.6 523.4h0M671.4 520.2h0M674.8 523.6h0M672.6 525h0M672 523.9h0M670.1 525h0M674.5 527.7h0M674.9 525.4h0M677.3 521.5h0M676.1 522.9h0M672 524.2h0M666.8 526.9h0M678.6 525.5h0M670.5 525h0M677.8 524.9h0M679.5 525.4h0M675.2 524.3h0M676.3 532.5h0M669.8 526.9h0M673.3 525.3h0M674.7 524.4h0M672.4 524h0M672.6 526.1h0M674.4 521.9h0M674.5 524.3h0M674.3 524.1h0M676.6 522h0M672.9 525.2h0M666 522.9h0M520.6 575.9h0M513.2 574.4h0M521.1 581.4h0M508.7 576.6h0M511 576.9h0M514.8 579.3h0M514.5 576.6h0M515.4 578.2h0M509.4 583.5h0M517.7 577.1h0M516 579.6h0M508.8 578.6h0M516.2 575.6h0M509.3 583.4h0M517.5 578.6h0M516.9 574h0M512.9 580.8h0M513.2 582h0M517.3 578.7h0M509.4 584.9h0M512.7 575.1h0M511.4 574.6h0M513 579h0M515.7 581.9h0M509.3 583.7h0M515.6 580.9h0M518.6 583.9h0M516.4 578.7h0M514 576.6h0M515.7 581.2h0M513.4 577.3h0M513.4 576.8h0M513.2 581h0M516.5 577.8h0M515.1 580.6h0M517 578.2h0M514.5 581.5h0M518.7 581.7h0M513.1 580h0M514.4 579.2h0M507.8 577.6h0M571.6 582h0M568 584.4h0M565.1 570.7h0M567 577.6h0M568.3 577.8h0M570.6 582.7h0M570.1 578.1h0M566.3 577.4h0M562.9 581h0M565 570.3h0M569.1 574.6h0M564.6 572.6h0M568.3 581.2h0M567.2 573.8h0M564.2 581.8h0M568.1 575.6h0M563.1 573.1h0M566.1 575.4h0M566.6 583.5h0M569.5 580.8h0M570.1 577.6h0M565.5 573.5h0M570.3 575.8h0M569 573h0M568.4 579h0M566.7 582.4h0M564.3 573.1h0M566.8 576.8h0M561.9 576.9h0M571.7 575.4h0M570.9 574.3h0M562.9 575h0M565.6 577.7h0M567.2 579.7h0M566 576h0M565.8 578.2h0M564.7 578.3h0M566 574h0M569 579.8h0M566.4 577.3h0M567.1 575.9h0M617.6 578.2h0M623.6 582.6h0M621.3 574.6h0M618.5 580.3h0M616.9 576.6h0M612.9 577.1h0M616.2 579h0M623.8 580.1h0M622.1 580.5h0M618.6 577.3h0M614.6 580.1h0M623.2 577.3h0M622.7 577.9h0M612.5 578.8h0M613.3 579.1h0M618.6 580.8h0M619.4 581.9h0M619.5 580.3h0M618.6 581.4h0M616.5 580.2h0M624.2 580.6h0M621.1 577.8h0M617.7 578.5h0M618.9 575.6h0M618.7 578.7h0M619.3 580.6h0M612 579.2h0M619.3 576.2h0M617.2 578.8h0M622.4 578.8h0M619.3 575.8h0M619.3 578.1h0M618.3 579.7h0M621.9 580h0M617.8 580.8h0M618.5 578.3h0M618.1 579h0M619.9 578.6h0M618.7 578.1h0M612.7 582.3h0M673.8 580.9h0M669.6 580.9h0M670.4 577.2h0M676.4 578.9h0M671.3 579.7h0M673.4 579.3h0M677.3 583.1h0M671.4 572.6h0M676.5 580.8h0M674.5 571.9h0M671.5 582.6h0M674 571.4h0M676.5 578.9h0M673.8 577h0M670.4 576.8h0M675.6 582h0M670.1 579h0M672.3 579.4h0M669.8 577.1h0M673.1 583.4h0M673 579.5h0M670.3 578.6h0M673.7 583.1h0M675.5 574.9h0M674.2 577.9h0M670.5 577.6h0M675.6 582.2h0M676.1 582.6h0M672.5 574.5h0M671.4 578.9h0M675.3 578.8h0M675.5 577.2h0M673.7 580.9h0M674.6 580.2h0M670.9 575.9h0M672.5 580.1h0M676.5 577.6h0M672.3 576.9h0M672.5 579.4h0M680.6 581.6h0" fill="none" stroke="#8c8c8c" stroke-width="3.3" stroke-linecap="round"/>
<rect x="704.5" y="397.5" width="16" height="203.5" fill="#ececec" stroke="#dcdcdc" stroke-width="1"/>
<path d="M721 397.5h5M721 407.68h3.5M721 417.85h3.5M721 428.02h3.5M721 438.2h3.5M721 448.38h5M721 458.55h3.5M721 468.73h3.5M721 478.9h3.5M721 489.07h3.5M721 499.25h5M721 509.43h3.5M721 519.6h3.5M721 529.77h3.5M721 539.95h3.5M721 550.12h5M721 560.3h3.5M721 570.48h3.5M721 580.65h3.5M721 590.83h3.5M721 601h5" stroke="#cfcfcf" stroke-width="1" fill="none"/>
<rect x="705" y="412" width="15" height="5" fill="#8fb8e0"/>
<rect x="705" y="516" width="15" height="5" fill="#e9eff8"/>
<rect x="705" y="521" width="15" height="5" fill="#edf1f7"/>
<rect x="705" y="526" width="15" height="5" fill="#4583c4"/>
<rect x="705" y="531" width="15" height="5" fill="#e7edf7"/>
<rect x="705" y="536" width="15" height="4" fill="#eef1f6"/>
</svg>
<div class="t" style="left:469px;width:20.5px;text-align:right;top:391.5px;font-size:10px;color:#555">4</div>
<div class="t" style="left:469px;width:20.5px;text-align:right;top:442.4px;font-size:10px;color:#555">2</div>
<div class="t" style="left:469px;width:20.5px;text-align:right;top:493.2px;font-size:10px;color:#555">0</div>
<div class="t" style="left:469px;width:20.5px;text-align:right;top:544.1px;font-size:10px;color:#555">-2</div>
<div class="t" style="left:469px;width:20.5px;text-align:right;top:595px;font-size:10px;color:#555">-4</div>
<div class="t" style="left:477px;width:30px;text-align:center;top:602px;font-size:10px;color:#555">-4</div>
<div class="t" style="left:528px;width:30px;text-align:center;top:602px;font-size:10px;color:#555">-2</div>
<div class="t" style="left:579px;width:30px;text-align:center;top:602px;font-size:10px;color:#555">0</div>
<div class="t" style="left:630px;width:30px;text-align:center;top:602px;font-size:10px;color:#555">2</div>
<div class="t" style="left:681px;width:30px;text-align:center;top:602px;font-size:10px;color:#555">4</div>
<div class="t" style="left:727.5px;top:392px;font-size:10px;color:#555;transform:scaleX(.93);transform-origin:0 50%">0</div>
<div class="t" style="left:727.5px;top:442.9px;font-size:10px;color:#555;transform:scaleX(.93);transform-origin:0 50%">10</div>
<div class="t" style="left:727.5px;top:493.8px;font-size:10px;color:#555;transform:scaleX(.93);transform-origin:0 50%">20</div>
<div class="t" style="left:727.5px;top:544.6px;font-size:10px;color:#555;transform:scaleX(.93);transform-origin:0 50%">30</div>
<div class="t" style="left:727.5px;top:595.5px;font-size:10px;color:#555;transform:scaleX(.93);transform-origin:0 50%">40</div>
<div class="ct" style="left:824px;top:365px;transform:scaleX(1.03);transform-origin:0 50%">Signal, Noise and Interference</div>
<svg width="1201" height="630" viewBox="0 0 1201 630">
<g stroke="#e6e6e6" stroke-width="1"><path d="M824 437.5H1130"/><path d="M824 509.5H1130"/><path d="M824 582.5H1130"/></g>
<rect x="824" y="597.5" width="306" height="18.5" fill="#d3e6d0"/>
<g fill="none" stroke-width="1" stroke-linejoin="round"><polyline points="824,575.5 828.9,575.5 833.7,575.5 838.6,575.5 843.4,575.5 848.3,575.5 853.1,575.5 858,575.5 862.9,575.5 867.7,575.5 872.6,575.5 877.4,575.5 882.3,575.5 887.1,575.5 892,575.5 896.9,575.5 901.7,575.5 906.6,575.5 911.4,575.5 916.3,575.5 921.1,575.5 926,575.5 930.9,575.5 935.7,575.5 940.6,575.5 945.4,575.5 950.3,575.5 955.1,575.5 960,589.9 964.9,582.7 969.7,582.7 974.6,575.5 979.4,575.5 984.3,582.7 989.1,582.7 994,416.2 998.9,416.2 1003.7,416.2 1008.6,561 1013.4,582.7 1018.3,575.5 1023.1,575.5 1028,597.2 1032.9,568.2 1037.7,575.5 1042.6,582.7 1047.4,575.5 1052.3,582.7 1057.1,582.7 1062,561 1066.9,575.5 1071.7,416.2 1076.6,416.2 1081.4,575.5 1086.3,582.7 1091.1,582.7 1096,582.7 1100.9,589.9 1105.7,589.9 1110.6,568.2 1115.4,575.5 1120.3,597.2 1125.1,589.9 1130,568.2" stroke="#ff8a2a"/><polyline points="824,394.5 828.9,394.5 833.7,394.5 838.6,394.5 843.4,394.5 848.3,394.5 853.1,394.5 858,394.5 862.9,394.5 867.7,394.5 872.6,394.5 877.4,394.5 882.3,394.5 887.1,394.5 892,394.5 896.9,394.5 901.7,394.5 906.6,394.5 911.4,394.5 916.3,394.5 921.1,394.5 926,394.5 930.9,394.5 935.7,394.5 940.6,394.5 945.4,394.5 950.3,394.5 955.1,394.5 960,380 964.9,387.2 969.7,380 974.6,380 979.4,387.2 984.3,387.2 989.1,387.2 994,394.5 998.9,394.5 1003.7,394.5 1008.6,380 1013.4,387.2 1018.3,387.2 1023.1,387.2 1028,387.2 1032.9,387.2 1037.7,387.2 1042.6,387.2 1047.4,387.2 1052.3,387.2 1057.1,387.2 1062,387.2 1066.9,387.2 1071.7,394.5 1076.6,394.5 1081.4,394.5 1086.3,380 1091.1,387.2 1096,387.2 1100.9,387.2 1105.7,394.5 1110.6,387.2 1115.4,387.2 1120.3,387.2 1125.1,394.5 1130,380" stroke="#2b9bcf"/></g>
</svg>
<div class="t" style="left:1132.5px;top:433.7px;font-size:8px;color:#777;letter-spacing:-.3px">-70</div>
<div class="t" style="left:1132.5px;top:506.1px;font-size:8px;color:#777;letter-spacing:-.3px">-80</div>
<div class="t" style="left:1132.5px;top:578.5px;font-size:8px;color:#777;letter-spacing:-.3px">-90</div>
<div style="position:absolute;left:832px;top:382px;width:145px;height:60px;background:rgba(255,255,255,.86);border:1px solid #cfcfcf"></div>
<div style="position:absolute;left:833px;top:398px;width:34px;height:2px;background:#1b7fc1"></div>
<div style="position:absolute;left:833px;top:400px;width:145px;height:1px;background:#1b8bc4"></div>
<div class="t" style="left:839px;top:383.5px;font-size:9.5px;line-height:12px;color:#222;transform:scaleX(.92);transform-origin:0 50%">Local</div>
<div class="t" style="left:873px;top:383.5px;font-size:9.5px;line-height:12px;color:#333;transform:scaleX(.92);transform-origin:0 50%">Remote</div>
<div style="position:absolute;left:840px;top:403px;width:10px;height:9.5px;background:#1f8fc5"></div>
<div class="t" style="left:856px;top:404.5px;font-size:9px;line-height:11px;color:#3c3c44;transform:scaleX(0.988);transform-origin:0 50%">Average Signal -62 dBm</div>
<div style="position:absolute;left:840px;top:416.5px;width:10px;height:9.5px;background:#ff7f1e"></div>
<div class="t" style="left:856px;top:418px;font-size:9px;line-height:11px;color:#3c3c44;transform:scaleX(1.021);transform-origin:0 50%">Interference + Noise -88 dBm</div>
<div style="position:absolute;left:840px;top:430px;width:10px;height:9.5px;background:#257a16"></div>
<div class="t" style="left:856px;top:431.5px;font-size:9px;line-height:11px;color:#3c3c44;transform:scaleX(1.011);transform-origin:0 50%">Noise Floor -92 dBm</div>

</body>
</html>
